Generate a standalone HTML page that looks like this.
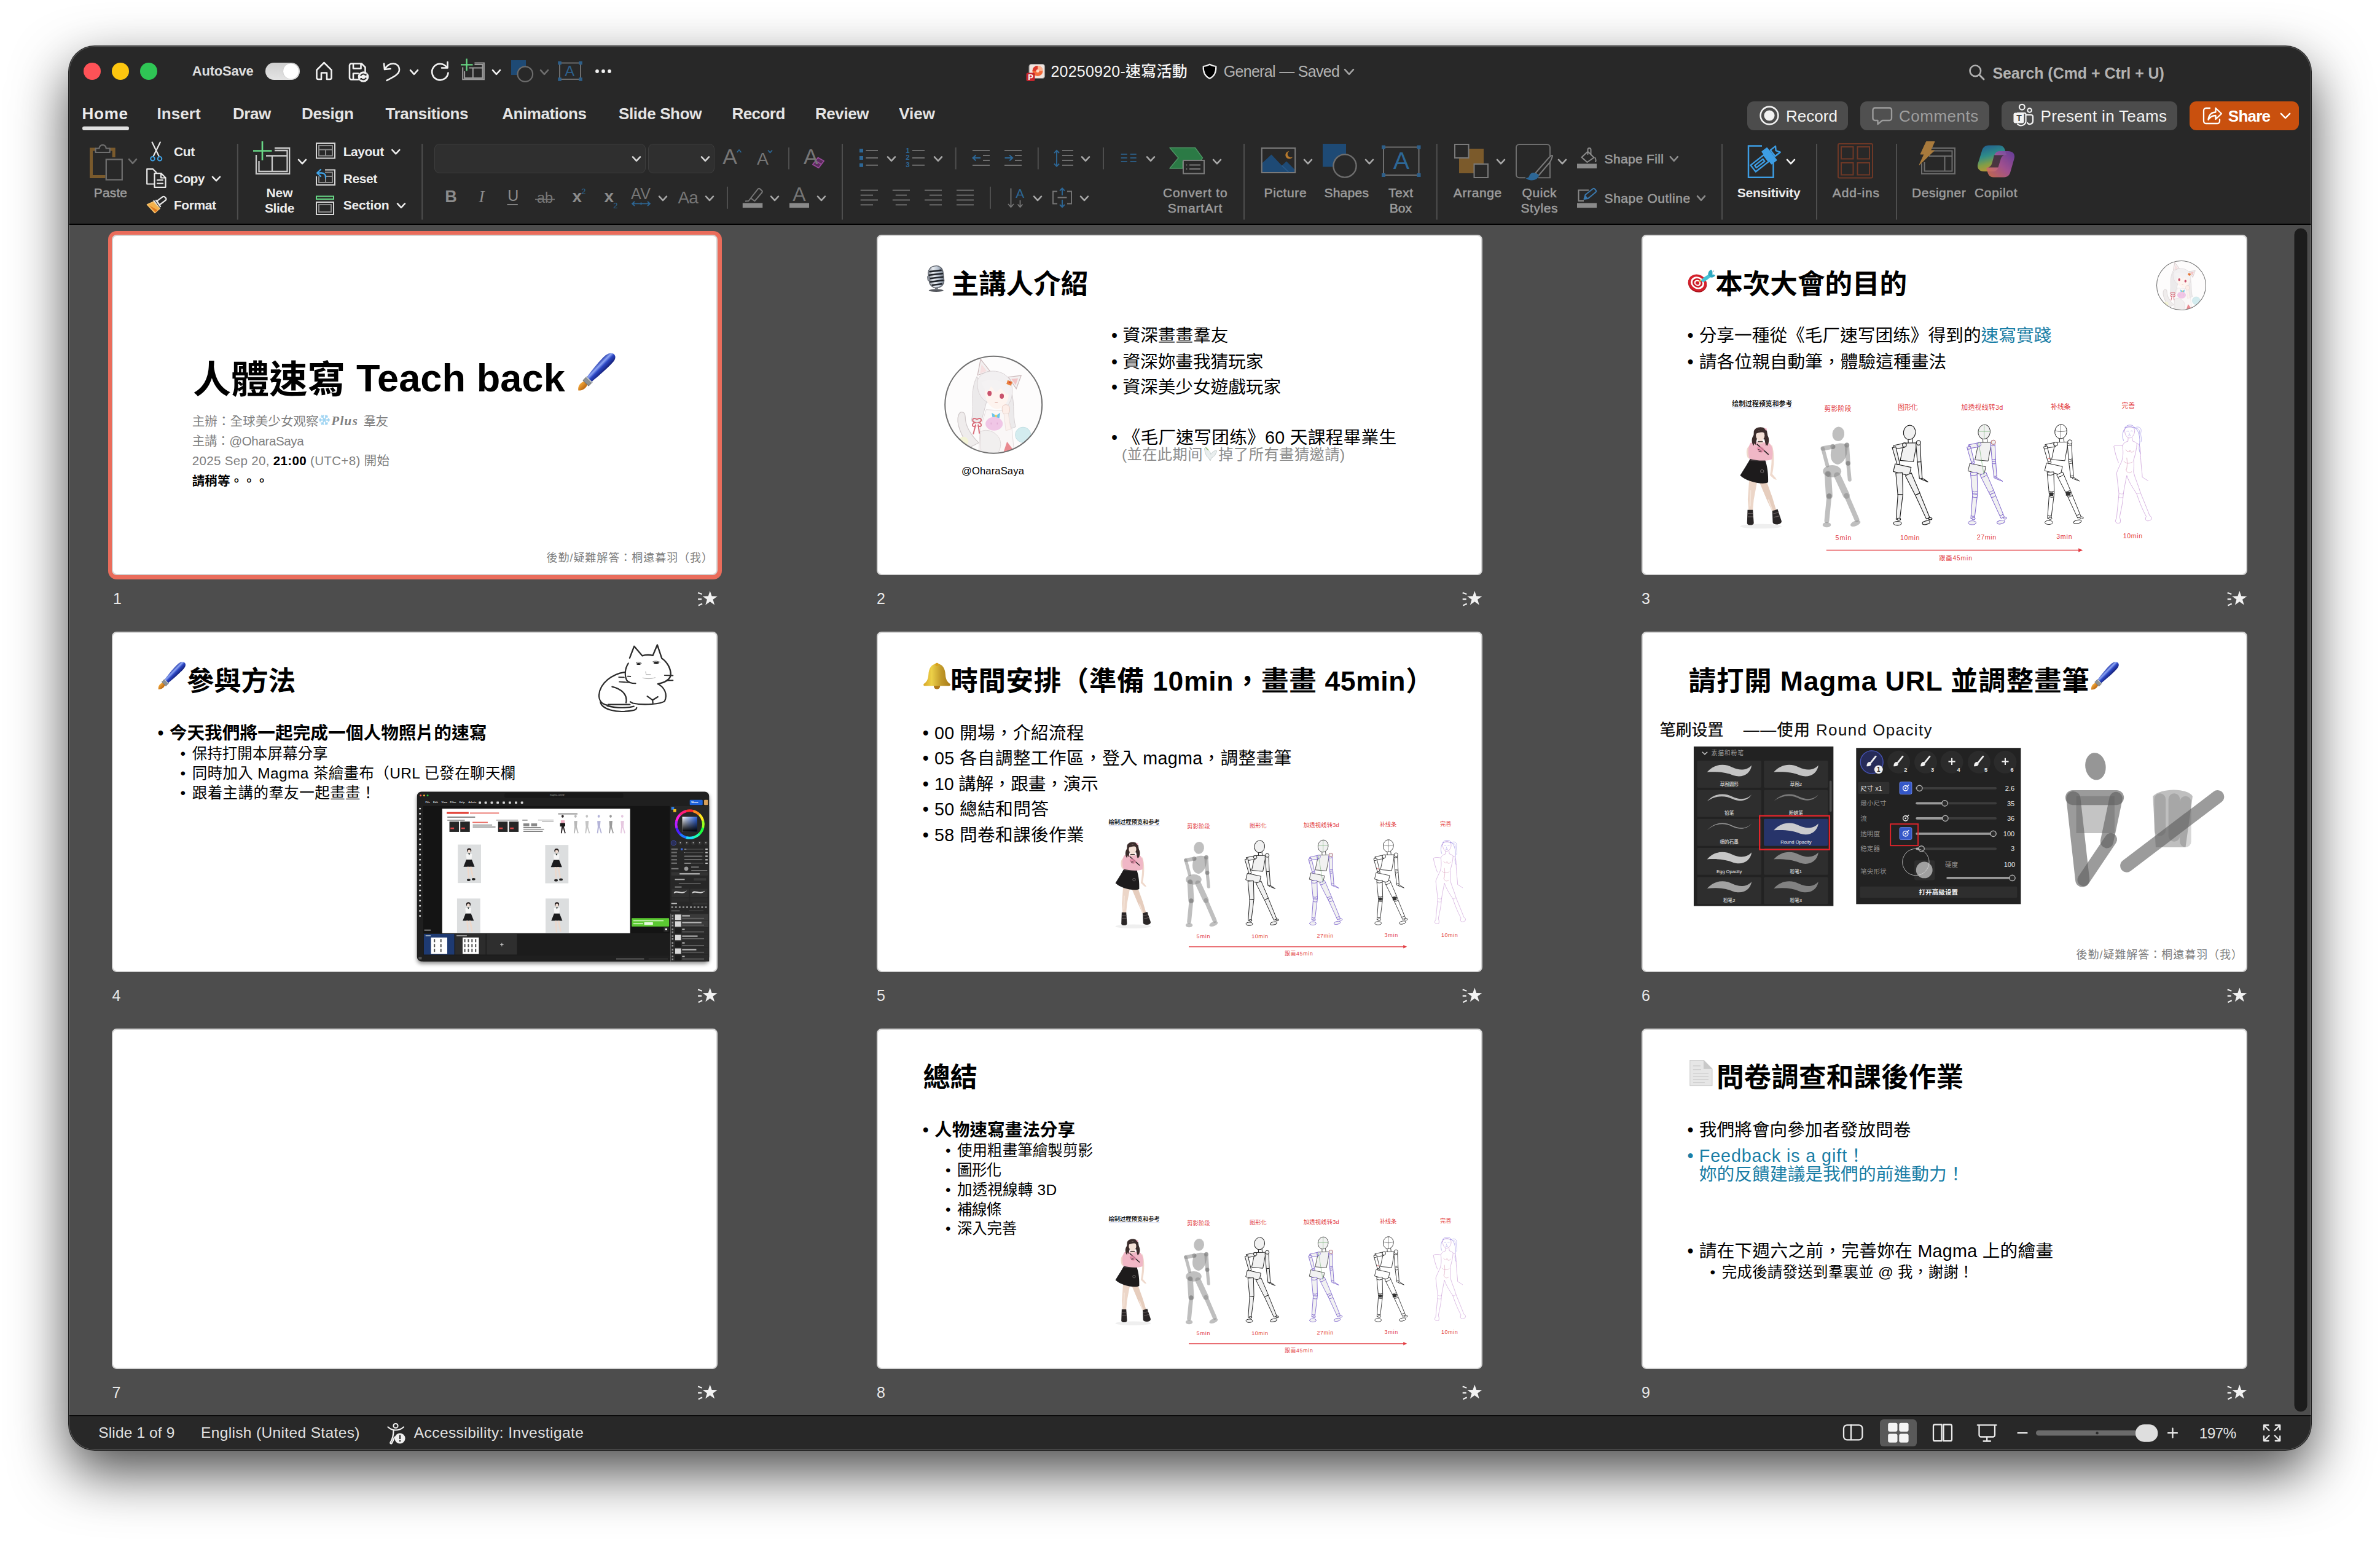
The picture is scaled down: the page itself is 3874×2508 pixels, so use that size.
<!DOCTYPE html>
<html lang="zh-Hant"><head><meta charset="utf-8"><title>20250920-速寫活動</title>
<style>
html,body{margin:0;padding:0}
body{width:3874px;height:2508px;background:#fff;position:relative;overflow:hidden;font-family:"Liberation Sans","Noto Sans CJK TC",sans-serif;}
.t{position:absolute;white-space:nowrap;}
#win{position:absolute;left:112px;top:75px;width:3650px;height:2285px;border-radius:42px;background:#4d4d4d;box-shadow:0 36px 90px rgba(0,0,0,.71),0 0 0 1px rgba(0,0,0,.82);overflow:hidden}
#in{position:absolute;left:-112px;top:-75px;width:3874px;height:2508px}
#ic{position:absolute;left:0;top:0}
#rim{position:absolute;left:0;top:0;right:0;bottom:0;border-radius:42px;box-shadow:inset 0 0 0 1.2px rgba(255,255,255,.2);pointer-events:none}
</style></head><body>
<div id="win"><div id="in">
<div style="position:absolute;left:112.0px;top:75.0px;width:3650.0px;height:289.5px;background:#282828;border-radius:0px;"></div>
<div style="position:absolute;left:112.0px;top:363.8px;width:3650.0px;height:2.4px;background:#000;border-radius:0px;"></div>
<div style="position:absolute;left:112.0px;top:2303.2px;width:3650.0px;height:2.2px;background:#0a0a0a;border-radius:0px;"></div>
<div style="position:absolute;left:112.0px;top:2305.2px;width:3650.0px;height:56.0px;background:#282828;border-radius:0px;"></div>
<div style="position:absolute;left:2844.0px;top:164.5px;width:164.0px;height:47.2px;background:#4c4c4c;border-radius:11px;"></div>
<div style="position:absolute;left:3028.0px;top:164.5px;width:210.0px;height:47.2px;background:#505050;border-radius:11px;"></div>
<div style="position:absolute;left:3258.0px;top:164.5px;width:286.0px;height:47.2px;background:#4c4c4c;border-radius:11px;"></div>
<div style="position:absolute;left:3563.8px;top:164.5px;width:178.2px;height:47.2px;background:#c9500e;border-radius:11px;"></div>
<div style="position:absolute;left:3060.0px;top:2310.0px;width:60.0px;height:43.5px;background:#595959;border-radius:6px;"></div>
<div style="position:absolute;left:707.0px;top:234.0px;width:344.0px;height:47.8px;background:#2f2f2f;border-radius:8px;box-sizing:border-box;border:1.5px solid #3d3d3d;"></div>
<div style="position:absolute;left:1054.8px;top:234.0px;width:108.4px;height:47.8px;background:#2f2f2f;border-radius:8px;box-sizing:border-box;border:1.5px solid #3d3d3d;"></div>
<div style="position:absolute;left:176.0px;top:375.5px;width:998.8px;height:567.0px;background:#ea6c5b;border-radius:14px;"></div>
<div style="position:absolute;left:182.4px;top:382.0px;width:986.0px;height:554.0px;background:#fff;border-radius:8px;box-sizing:border-box;border:2px solid #d4d4d4;"></div>
<div style="position:absolute;left:1427.0px;top:382.0px;width:986.0px;height:554.0px;background:#fff;border-radius:8px;box-sizing:border-box;border:2px solid #d4d4d4;"></div>
<div style="position:absolute;left:2672.0px;top:382.0px;width:986.0px;height:554.0px;background:#fff;border-radius:8px;box-sizing:border-box;border:2px solid #d4d4d4;"></div>
<div style="position:absolute;left:182.4px;top:1027.8px;width:986.0px;height:554.0px;background:#fff;border-radius:8px;box-sizing:border-box;border:2px solid #d4d4d4;"></div>
<div style="position:absolute;left:1427.0px;top:1027.8px;width:986.0px;height:554.0px;background:#fff;border-radius:8px;box-sizing:border-box;border:2px solid #d4d4d4;"></div>
<div style="position:absolute;left:2672.0px;top:1027.8px;width:986.0px;height:554.0px;background:#fff;border-radius:8px;box-sizing:border-box;border:2px solid #d4d4d4;"></div>
<div style="position:absolute;left:182.4px;top:1673.8px;width:986.0px;height:554.0px;background:#fff;border-radius:8px;box-sizing:border-box;border:2px solid #d4d4d4;"></div>
<div style="position:absolute;left:1427.0px;top:1673.8px;width:986.0px;height:554.0px;background:#fff;border-radius:8px;box-sizing:border-box;border:2px solid #d4d4d4;"></div>
<div style="position:absolute;left:2672.0px;top:1673.8px;width:986.0px;height:554.0px;background:#fff;border-radius:8px;box-sizing:border-box;border:2px solid #d4d4d4;"></div>
<svg id="ic" width="3874" height="2508" viewBox="0 0 3874 2508">
<circle cx="150" cy="116" r="14" fill="#ff5257"/>
<circle cx="196" cy="116" r="14" fill="#fdc60f"/>
<circle cx="242" cy="116" r="14" fill="#2fc655"/>
<defs><linearGradient id="tg" x1="0" x2="0" y1="0" y2="1"><stop offset="0" stop-color="#cfcfcf"/><stop offset="1" stop-color="#e4e4e4"/></linearGradient></defs>
<rect x="432" y="102" width="56" height="28" rx="14" fill="url(#tg)"/>
<circle cx="473.5" cy="116" r="13" fill="#fff" stroke="#c4c4c4" stroke-width="0.8"/>
<path d="M515.5 114 L527.5 102 L539.5 114 V126.5 a2.5 2.5 0 0 1 -2.5 2.5 H532 V118.5 H523 V129 H518 a2.5 2.5 0 0 1 -2.5 -2.5 Z" fill="none" stroke="#f2f2f2" stroke-width="2.6" stroke-linecap="round" stroke-linejoin="round"/>
<path d="M572 103.5 H588.5 L594.5 109.5 V119 M583 129.5 H572 a3 3 0 0 1 -3 -3 V106.5 a3 3 0 0 1 3 -3 M575 104 V111.5 H587.5 V104 M575 129 V119.5 H583" fill="none" stroke="#f2f2f2" stroke-width="2.6" stroke-linecap="round" stroke-linejoin="round"/>
<circle cx="591.5" cy="125" r="8.8" fill="#f2f2f2"/>
<path d="M587 123.5 a5 5 0 0 1 8.2 -1.6 M596 126.5 a5 5 0 0 1 -8.2 1.6" fill="none" stroke="#282828" stroke-width="2"/><path d="M596.5 119.5 v3.4 h-3.4z M586.5 130.5 v-3.4 h3.4z" fill="#282828"/>
<path d="M625 103.5 L626 113 L635.5 112 M626.5 112.5 C632 100 650 100.5 650 113.5 C650 121 640 125.5 629.5 131" fill="none" stroke="#f2f2f2" stroke-width="2.6" stroke-linecap="round" stroke-linejoin="round"/>
<path d="M668.0 114.2 L674.0 120.8 L680.0 114.2" fill="none" stroke="#f2f2f2" stroke-width="2.6" stroke-linecap="round" stroke-linejoin="round"/>
<path d="M728.5 101 V110.5 H719 M727.5 110 A13.2 13.2 0 1 0 729.5 118.5" fill="none" stroke="#f2f2f2" stroke-width="2.6" stroke-linecap="round" stroke-linejoin="round"/>
<path d="M753.2 109.6 V129.3 H787.9 V102.5 H772.4 M756.1 116.0 V126.9 H785.5 V105.1 H772.4 M763.4 110.5 H785.5 M769.8 110.5 V126.9" fill="none" stroke="#9c9c9c" stroke-width="2.0"/>
<path d="M750.0 105.4 H769.5 M759.6 95.5 V115.3" fill="none" stroke="#66d683" stroke-width="2.30"/>
<path d="M802.0 114.2 L808.0 120.8 L814.0 114.2" fill="none" stroke="#f2f2f2" stroke-width="2.6" stroke-linecap="round" stroke-linejoin="round"/>
<rect x="832" y="98" width="24" height="24" fill="#1e4a75"/>
<circle cx="854.8" cy="120.6" r="12.3" fill="#282828" stroke="#6c6c6c" stroke-width="2.2"/>
<path d="M880.0 114.2 L886.0 120.8 L892.0 114.2" fill="none" stroke="#6e6e6e" stroke-width="2.6" stroke-linecap="round" stroke-linejoin="round"/>
<rect x="911" y="102.5" width="34" height="26.5" fill="none" stroke="#6c6c6c" stroke-width="2"/>
<rect x="908.2" y="99.7" width="5.6" height="5.6" fill="#2d5f8a"/>
<rect x="942.2" y="99.7" width="5.6" height="5.6" fill="#2d5f8a"/>
<rect x="908.2" y="126.2" width="5.6" height="5.6" fill="#2d5f8a"/>
<rect x="942.2" y="126.2" width="5.6" height="5.6" fill="#2d5f8a"/>
<circle cx="972" cy="116" r="2.9" fill="#f2f2f2"/>
<circle cx="982" cy="116" r="2.9" fill="#f2f2f2"/>
<circle cx="992" cy="116" r="2.9" fill="#f2f2f2"/>
<rect x="1675" y="104.5" width="25.5" height="23" rx="4" fill="#f0e4de" stroke="#8d8d8d" stroke-width="1.2"/>
<circle cx="1689" cy="115.5" r="8.5" fill="#f36a3a"/><path d="M1689 115.5 V107 A8.5 8.5 0 0 1 1697.5 115.5 Z" fill="#ffb28e"/><path d="M1689 115.5 H1680.5 A8.5 8.5 0 0 1 1689 107 Z" fill="#d8372a"/><circle cx="1689" cy="115.5" r="2.5" fill="#ffd9c4"/>
<rect x="1670.5" y="118.5" width="14" height="13.5" rx="2.5" fill="#c4262e"/>
<path d="M1969 104.8 C1973 107.2 1976 107.8 1979.3 108 C1979.8 118 1976 124.5 1969 127.8 C1962 124.5 1958.2 118 1958.7 108 C1962 107.8 1965 107.2 1969 104.8 Z" fill="#000" stroke="#f0f0f0" stroke-width="2.2" stroke-linejoin="round"/>
<path d="M2189.0 113.2 L2196.0 120.8 L2203.0 113.2" fill="none" stroke="#a4a4a4" stroke-width="2.6" stroke-linecap="round" stroke-linejoin="round"/>
<circle cx="3215.3" cy="115.3" r="8.8" fill="none" stroke="#b0b0b0" stroke-width="2.6"/><path d="M3221.8 121.8 L3229 129" stroke="#b0b0b0" stroke-width="3" stroke-linecap="round"/>
<rect x="134" y="205.8" width="76" height="6.2" rx="3.1" fill="#e0e0e0"/>
<circle cx="2880" cy="188" r="14.4" fill="none" stroke="#f2f2f2" stroke-width="2.6"/><circle cx="2880" cy="188" r="8.6" fill="#f2f2f2"/>
<path d="M3052 175.5 H3075.5 a3.5 3.5 0 0 1 3.5 3.5 V192.5 a3.5 3.5 0 0 1 -3.5 3.5 H3064 L3056.5 202 V196 H3052 a3.5 3.5 0 0 1 -3.5 -3.5 V179 a3.5 3.5 0 0 1 3.5 -3.5 Z" fill="none" stroke="#9c9c9c" stroke-width="2.4" stroke-linejoin="round"/>
<circle cx="3291.3" cy="174.2" r="4.4" fill="none" stroke="#f2f2f2" stroke-width="2.2"/><circle cx="3303.6" cy="179.5" r="3.3" fill="none" stroke="#f2f2f2" stroke-width="2"/><path d="M3299 187 H3306 a3 3 0 0 1 3 3 V197 a5 5 0 0 1 -9 3 M3284 202 a8 8 0 0 0 13.5 -4 V186 a2 2 0 0 0 -2 -2 H3284" fill="none" stroke="#f2f2f2" stroke-width="2.2" stroke-linecap="round"/><rect x="3277.5" y="183.5" width="17" height="17" rx="3" fill="#f2f2f2"/>
<path d="M3597 176 H3591 a4 4 0 0 0 -4 4 V197 a4 4 0 0 0 4 4 H3609 a4 4 0 0 0 4 -4 V194.5 M3594.5 195 C3595 187 3600 182.5 3606.5 182.5 V176 L3616 185 L3606.5 194 V188 C3601.5 188 3597.5 190 3594.5 195 Z" fill="none" stroke="#fff" stroke-width="2.3" stroke-linejoin="round" stroke-linecap="round"/>
<path d="M3712.8 184.8 L3720.0 192.2 L3727.2 184.8" fill="none" stroke="#fff" stroke-width="2.4" stroke-linecap="round" stroke-linejoin="round"/>
<circle cx="644" cy="2320.5" r="3.6" fill="none" stroke="#f0f0f0" stroke-width="2"/><path d="M631.5 2322.5 C636 2326.5 640 2327.5 644 2327.5 C648 2327.5 652.5 2326.500 657 2322.5 M640.5 2328 C640.5 2336 639 2342 635.500 2347.5 C634.5 2349 637 2350.500 638 2348.5 C640 2345 641 2342 642 2339" fill="none" stroke="#f0f0f0" stroke-width="2.2" stroke-linecap="round" stroke-linejoin="round"/><circle cx="651" cy="2341" r="8.6" fill="#f0f0f0"/><rect x="650" y="2335.5" width="2.2" height="6.6" fill="#282828"/><rect x="650" y="2344" width="2.2" height="2.3" fill="#282828"/>
<rect x="3001" y="2319.3" width="30.4" height="24" rx="5.5" fill="none" stroke="#eaeaea" stroke-width="2.3" stroke-linejoin="round" stroke-linecap="round"/><path d="M3013 2319.5 V2343" fill="none" stroke="#eaeaea" stroke-width="2.3" stroke-linejoin="round" stroke-linecap="round"/>
<rect x="3073.2" y="2315.8" width="15.3" height="14.2" rx="3" fill="#f4f4f4"/>
<rect x="3073.2" y="2333.6" width="15.3" height="14.2" rx="3" fill="#f4f4f4"/>
<rect x="3091.3" y="2315.8" width="15.3" height="14.2" rx="3" fill="#f4f4f4"/>
<rect x="3091.3" y="2333.6" width="15.3" height="14.2" rx="3" fill="#f4f4f4"/>
<path d="M3147 2321 a2.5 2.5 0 0 1 2.5 -2.5 H3160.5 V2345.2 H3149.5 a2.5 2.5 0 0 1 -2.5 -2.5 Z M3163.5 2318.5 H3174.500 a2.5 2.5 0 0 1 2.5 2.5 V2342.700 a2.5 2.5 0 0 1 -2.5 2.5 H3163.5 Z" fill="none" stroke="#eaeaea" stroke-width="2.3" stroke-linejoin="round" stroke-linecap="round"/>
<path d="M3218.8 2319.3 H3249.6 M3221.5 2320 V2335.500 a3 3 0 0 0 3 3 H3244 a3 3 0 0 0 3 -3 V2320 M3234.2 2339 V2345.2 M3228.5 2345.5 H3240" fill="none" stroke="#eaeaea" stroke-width="2.3" stroke-linejoin="round" stroke-linecap="round"/>
<path d="M3284.500 2332.2 H3299.500" fill="none" stroke="#eaeaea" stroke-width="2.3" stroke-linejoin="round" stroke-linecap="round"/>
<rect x="3314" y="2328" width="198" height="8.4" rx="4.2" fill="#6b6b6b"/><circle cx="3413.6" cy="2332.3" r="2.2" fill="#2c2c2c"/>
<rect x="3476" y="2318.3" width="36.4" height="28.4" rx="14" fill="#dedede"/>
<path d="M3529 2332.2 H3544 M3536.5 2324.700 V2339.700" fill="none" stroke="#eaeaea" stroke-width="2.3" stroke-linejoin="round" stroke-linecap="round"/>
<path d="M3685 2327 V2319.500 H3692.500 M3685.5 2320 L3693.5 2328 M3711.2 2327 V2319.500 H3703.700 M3710.700 2320 L3702.700 2328 M3685 2337.500 V2345 H3692.500 M3685.5 2344.500 L3693.5 2336.500 M3711.2 2337.500 V2345 H3703.700 M3710.700 2344.500 L3702.700 2336.500" fill="none" stroke="#eaeaea" stroke-width="2.3" stroke-linejoin="round" stroke-linecap="round"/>
<rect x="3734.5" y="371.5" width="21" height="1926" rx="10.5" fill="#1c1c1c"/>
<path d="M171.5 287.5 H148.5 V243 H156 M178 243 H185.200 V256" fill="none" stroke="#7a5a2c" stroke-width="5"/>
<path d="M155.5 248 V241.500 H161.5 a5.6 5.6 0 0 1 11.2 0 H178.700 V248 Z" fill="#282828" stroke="#6e6e6e" stroke-width="2.2" stroke-linejoin="round"/>
<rect x="172.8" y="259.500" width="26" height="33" fill="#282828" stroke="#6e6e6e" stroke-width="2.3"/>
<path d="M210.0 259.2 L216.0 265.8 L222.0 259.2" fill="none" stroke="#6e6e6e" stroke-width="2.6" stroke-linecap="round" stroke-linejoin="round"/>
<path d="M247.6 231.5 L258.6 254 M260.8 231.5 L249.8 254" fill="none" stroke="#e8e8e8" stroke-width="2.2" stroke-linecap="round" stroke-linejoin="round"/>
<circle cx="248.5" cy="258.2" r="3.3" fill="none" stroke="#3fa2e6" stroke-width="2"/><circle cx="260" cy="258.2" r="3.3" fill="none" stroke="#3fa2e6" stroke-width="2"/>
<path d="M250.5 299.5 H239.2 V275.2 H249 L254 280.2 M251.5 282.2 H262.5 L269.5 289.2 V304.8 H251.5 Z M262 282.5 V289.5 H269 M256 293 H265 M256 298.5 H265" fill="none" stroke="#e8e8e8" stroke-width="2.2" stroke-linecap="round" stroke-linejoin="round"/>
<path d="M346.0 287.8 L352.0 294.2 L358.0 287.8" fill="none" stroke="#ececec" stroke-width="2.6" stroke-linecap="round" stroke-linejoin="round"/>
<path d="M268.8 321.5 a2.6 2.6 0 0 0 -3.8 -1.3 L255.5 327.200 L259.5 333.5 L269 326.300 a2.6 2.6 0 0 0 -0.2 -4.8 Z M254 326.200 L261 336 M250.5 327 L259.5 339.500" fill="none" stroke="#e8e8e8" stroke-width="2.2" stroke-linecap="round" stroke-linejoin="round"/>
<path d="M249.5 328.5 L239.5 333 L252 346.500 L259.800 339.300 Z" fill="#f3b04a" stroke="#f6c06a" stroke-width="1.6" stroke-linejoin="round"/><path d="M243 334.5 L253 345.500 L256.500 342 Z" fill="#e07820"/>
<path d="M386.8 234.0 V357.5" stroke="#4e4e4e" stroke-width="2"/>
<path d="M417.0 252.0 V282.8 H471.2 V241.0 H447.0 M421.5 262.0 V279.0 H467.5 V245.0 H447.0 M433.0 253.5 H467.5 M443.0 253.5 V279.0" fill="none" stroke="#c9c9c9" stroke-width="2.3"/>
<path d="M412.0 245.5 H442.5 M427.0 230.0 V261.0" fill="none" stroke="#68d886" stroke-width="2.64"/>
<path d="M486.0 259.9 L492.0 266.4 L498.0 259.9" fill="none" stroke="#ececec" stroke-width="2.6" stroke-linecap="round" stroke-linejoin="round"/>
<rect x="515" y="233" width="30" height="24.5" fill="none" stroke="#d6d6d6" stroke-width="2"/>
<rect x="519" y="237" width="22" height="16.5" fill="none" stroke="#8a8a8a" stroke-width="2"/>
<path d="M519 243.5 H541 M530 243.5 V253.500" stroke="#8a8a8a" stroke-width="2" fill="none"/>
<path d="M638.3 243.9 L644.3 250.4 L650.3 243.9" fill="none" stroke="#ececec" stroke-width="2.6" stroke-linecap="round" stroke-linejoin="round"/>
<rect x="515" y="276.5" width="30" height="24.5" fill="none" stroke="#d6d6d6" stroke-width="2"/>
<rect x="519" y="280.5" width="22" height="16.5" fill="none" stroke="#8a8a8a" stroke-width="2"/>
<rect x="512" y="272" width="17" height="15" fill="#282828"/><path d="M530 285 V297 M530 287 H541" stroke="#8a8a8a" stroke-width="2" fill="none"/>
<path d="M522 276 L516 281.500 L522 287 M516.5 281.5 H523.500 C528 281.500 530.500 284.500 530 289.500" fill="none" stroke="#3fa2e6" stroke-width="2.3" stroke-linecap="round" stroke-linejoin="round"/>
<rect x="515" y="319.500" width="28" height="4.6" fill="none" stroke="#68d886" stroke-width="2"/>
<rect x="515" y="329" width="28" height="20" fill="none" stroke="#d6d6d6" stroke-width="2"/><rect x="519" y="333" width="20" height="12" fill="none" stroke="#8a8a8a" stroke-width="2"/>
<path d="M647.0 331.4 L653.0 337.9 L659.0 331.4" fill="none" stroke="#ececec" stroke-width="2.6" stroke-linecap="round" stroke-linejoin="round"/>
<path d="M687.2 234.0 V357.5" stroke="#4e4e4e" stroke-width="2"/>
<path d="M1030.0 255.4 L1036.0 261.9 L1042.0 255.4" fill="none" stroke="#d6d6d6" stroke-width="2.6" stroke-linecap="round" stroke-linejoin="round"/>
<path d="M1142.0 255.4 L1148.0 261.9 L1154.0 255.4" fill="none" stroke="#d6d6d6" stroke-width="2.6" stroke-linecap="round" stroke-linejoin="round"/>
<path d="M1199.5 248 L1203 244.200 L1206.500 248" fill="none" stroke="#2d6796" stroke-width="1.8"/>
<path d="M1250 244.5 L1253.5 248.300 L1257 244.500" fill="none" stroke="#2d6796" stroke-width="1.8"/>
<path d="M1284.0 240.0 V275.5" stroke="#4e4e4e" stroke-width="2"/>
<path d="M1331.5 256.5 L1341.200 262 L1332.5 273.200 L1322.800 267.700 Z M1327.5 261.800 L1337 267.5" fill="#5a2c5c" stroke="#9a4a9c" stroke-width="1.7" stroke-linejoin="round"/>
<path d="M1371.0 234.0 V357.5" stroke="#4e4e4e" stroke-width="2"/>
<path d="M825.5 333 H842.800" stroke="#8c8c8c" stroke-width="1.8"/>
<path d="M871 324.5 H903" stroke="#767676" stroke-width="1.6"/>
<path d="M1029 331.5 H1058 M1033 328 L1029 331.500 L1033 335 M1054 328 L1058 331.500 L1054 335 M1043.5 329.5 V333.500" fill="none" stroke="#2d6796" stroke-width="1.7"/>
<path d="M1073.0 319.6 L1079.0 326.1 L1085.0 319.6" fill="none" stroke="#a8a8a8" stroke-width="2.6" stroke-linecap="round" stroke-linejoin="round"/>
<path d="M1149.0 319.6 L1155.0 326.1 L1161.0 319.6" fill="none" stroke="#a8a8a8" stroke-width="2.6" stroke-linecap="round" stroke-linejoin="round"/>
<path d="M1184.0 303.7 V339.8" stroke="#4e4e4e" stroke-width="2"/>
<path d="M1222 322.5 L1233.500 307.800 a2.5 2.5 0 0 1 3.500 -0.4 L1239.8 310 a2.5 2.5 0 0 1 0.4 3.500 L1228.500 327.200 Z M1222 322.5 L1218.500 327 L1213 327.500" fill="none" stroke="#767676" stroke-width="2" stroke-linejoin="round"/>
<rect x="1208.8" y="330.500" width="32.5" height="7.6" fill="#8a8a8a"/>
<path d="M1255.0 319.6 L1261.0 326.1 L1267.0 319.6" fill="none" stroke="#a8a8a8" stroke-width="2.6" stroke-linecap="round" stroke-linejoin="round"/>
<rect x="1285" y="330.500" width="32" height="7.6" fill="#8a8a8a"/>
<path d="M1331.0 319.6 L1337.0 326.1 L1343.0 319.6" fill="none" stroke="#a8a8a8" stroke-width="2.6" stroke-linecap="round" stroke-linejoin="round"/>
<rect x="1399" y="242.2" width="6" height="6" fill="#2d6796"/>
<path d="M1409.5 245.2 H1429.0" stroke="#767676" stroke-width="1.8"/>
<path d="M1485.0 245.2 H1505.0" stroke="#767676" stroke-width="1.8"/>
<rect x="1399" y="254.0" width="6" height="6" fill="#2d6796"/>
<path d="M1409.5 257.0 H1429.0" stroke="#767676" stroke-width="1.8"/>
<path d="M1485.0 257.0 H1505.0" stroke="#767676" stroke-width="1.8"/>
<rect x="1399" y="265.8" width="6" height="6" fill="#2d6796"/>
<path d="M1409.5 268.8 H1429.0" stroke="#767676" stroke-width="1.8"/>
<path d="M1485.0 268.8 H1505.0" stroke="#767676" stroke-width="1.8"/>
<path d="M1445.0 255.4 L1451.0 261.9 L1457.0 255.4" fill="none" stroke="#a8a8a8" stroke-width="2.6" stroke-linecap="round" stroke-linejoin="round"/>
<path d="M1521.0 255.4 L1527.0 261.9 L1533.0 255.4" fill="none" stroke="#a8a8a8" stroke-width="2.6" stroke-linecap="round" stroke-linejoin="round"/>
<path d="M1555.7 240.0 V275.5" stroke="#4e4e4e" stroke-width="2"/>
<path d="M1583.0 245.2 H1611.0" stroke="#767676" stroke-width="1.8"/>
<path d="M1583.0 269.0 H1611.0" stroke="#767676" stroke-width="1.8"/>
<path d="M1600.0 253.2 H1611.0" stroke="#767676" stroke-width="1.8"/>
<path d="M1600.0 261.0 H1611.0" stroke="#767676" stroke-width="1.8"/>
<path d="M1635.0 245.2 H1663.0" stroke="#767676" stroke-width="1.8"/>
<path d="M1635.0 269.0 H1663.0" stroke="#767676" stroke-width="1.8"/>
<path d="M1652.0 253.2 H1663.0" stroke="#767676" stroke-width="1.8"/>
<path d="M1652.0 261.0 H1663.0" stroke="#767676" stroke-width="1.8"/>
<path d="M1583.5 257 H1596 M1588.500 252.5 L1583.500 257 L1588.500 261.500" fill="none" stroke="#2d6796" stroke-width="2"/>
<path d="M1635.5 257 H1648 M1643.200 252.5 L1648.200 257 L1643.200 261.500" fill="none" stroke="#2d6796" stroke-width="2"/>
<path d="M1689.8 240.0 V275.5" stroke="#4e4e4e" stroke-width="2"/>
<path d="M1729.0 245.2 H1747.0" stroke="#767676" stroke-width="1.8"/>
<path d="M1729.0 253.1 H1747.0" stroke="#767676" stroke-width="1.8"/>
<path d="M1729.0 261.0 H1747.0" stroke="#767676" stroke-width="1.8"/>
<path d="M1729.0 268.9 H1747.0" stroke="#767676" stroke-width="1.8"/>
<path d="M1720 245 V270.500 M1716 249 L1720 244.800 L1724 249 M1716 266.5 L1720 270.700 L1724 266.500" fill="none" stroke="#2d6796" stroke-width="1.9"/>
<path d="M1761.0 255.4 L1767.0 261.9 L1773.0 255.4" fill="none" stroke="#a8a8a8" stroke-width="2.6" stroke-linecap="round" stroke-linejoin="round"/>
<path d="M1796.0 240.0 V275.5" stroke="#4e4e4e" stroke-width="2"/>
<path d="M1824.7 251.0 H1834.7" stroke="#2d6796" stroke-width="1.6"/>
<path d="M1839.7 251.0 H1849.7" stroke="#2d6796" stroke-width="1.6"/>
<path d="M1824.7 257.0 H1834.7" stroke="#2d6796" stroke-width="1.6"/>
<path d="M1839.7 257.0 H1849.7" stroke="#2d6796" stroke-width="1.6"/>
<path d="M1824.7 263.0 H1834.7" stroke="#2d6796" stroke-width="1.6"/>
<path d="M1839.7 263.0 H1849.7" stroke="#2d6796" stroke-width="1.6"/>
<path d="M1867.0 255.4 L1873.0 261.9 L1879.0 255.4" fill="none" stroke="#a8a8a8" stroke-width="2.6" stroke-linecap="round" stroke-linejoin="round"/>
<path d="M1400.7 309.6 H1429.0" stroke="#767676" stroke-width="1.8"/>
<path d="M1452.8 309.6 H1481.0" stroke="#767676" stroke-width="1.8"/>
<path d="M1505.0 309.6 H1533.0" stroke="#767676" stroke-width="1.8"/>
<path d="M1557.0 309.6 H1585.0" stroke="#767676" stroke-width="1.8"/>
<path d="M1400.7 317.6 H1421.0" stroke="#767676" stroke-width="1.8"/>
<path d="M1457.8 317.6 H1476.0" stroke="#767676" stroke-width="1.8"/>
<path d="M1513.0 317.6 H1533.0" stroke="#767676" stroke-width="1.8"/>
<path d="M1557.0 317.6 H1585.0" stroke="#767676" stroke-width="1.8"/>
<path d="M1400.7 325.5 H1429.0" stroke="#767676" stroke-width="1.8"/>
<path d="M1452.8 325.5 H1481.0" stroke="#767676" stroke-width="1.8"/>
<path d="M1505.0 325.5 H1533.0" stroke="#767676" stroke-width="1.8"/>
<path d="M1557.0 325.5 H1585.0" stroke="#767676" stroke-width="1.8"/>
<path d="M1400.7 333.4 H1421.0" stroke="#767676" stroke-width="1.8"/>
<path d="M1457.8 333.4 H1476.0" stroke="#767676" stroke-width="1.8"/>
<path d="M1513.0 333.4 H1533.0" stroke="#767676" stroke-width="1.8"/>
<path d="M1557.0 333.4 H1585.0" stroke="#767676" stroke-width="1.8"/>
<path d="M1612.0 303.7 V339.8" stroke="#4e4e4e" stroke-width="2"/>
<path d="M1645.5 306.5 V337 M1641 332 L1645.500 337.200 L1650 332 M1660.5 326 V337 M1656.5 332.500 L1660.500 337.200 L1664.500 332.500" fill="none" stroke="#767676" stroke-width="1.8"/>
<path d="M1683.0 319.6 L1689.0 326.1 L1695.0 319.6" fill="none" stroke="#a8a8a8" stroke-width="2.6" stroke-linecap="round" stroke-linejoin="round"/>
<path d="M1721 311.5 H1714 V331.500 H1721 M1737 311.5 H1744 V331.500 H1737 M1721.5 321.5 H1736.500" fill="none" stroke="#767676" stroke-width="1.9"/>
<path d="M1729 306.5 V318 M1729 325 V337 M1725 310.5 L1729 306.300 L1733 310.500 M1725 333 L1729 337.200 L1733 333" fill="none" stroke="#2d6796" stroke-width="1.9"/>
<path d="M1759.0 319.6 L1765.0 326.1 L1771.0 319.6" fill="none" stroke="#a8a8a8" stroke-width="2.6" stroke-linecap="round" stroke-linejoin="round"/>
<path d="M1904 240.5 H1945.500 L1957.500 257 L1953 263 H1925 V274 H1904 L1918 257 Z" fill="#2b7a45" stroke="#4c9563" stroke-width="1.4" stroke-linejoin="round"/>
<rect x="1926" y="261" width="34" height="21.5" fill="#282828" stroke="#7a7a7a" stroke-width="2"/><path d="M1936 268.5 H1954 M1936 275 H1954" stroke="#7a7a7a" stroke-width="1.8"/><circle cx="1931.5" cy="268.500" r="1.1" fill="#7a7a7a"/><circle cx="1931.5" cy="275" r="1.1" fill="#7a7a7a"/>
<path d="M1975.0 259.9 L1981.0 266.4 L1987.0 259.9" fill="none" stroke="#a8a8a8" stroke-width="2.6" stroke-linecap="round" stroke-linejoin="round"/>
<path d="M2025.0 234.0 V357.5" stroke="#4e4e4e" stroke-width="2"/>
<rect x="2053.8" y="241" width="54.4" height="40" fill="#282828" stroke="#7a7a7a" stroke-width="2"/>
<path d="M2055 280 V265 L2069.500 251.500 L2086.500 269.500 L2094 262.500 L2107 275.500 V280 Z" fill="#1e4a75"/><path d="M2086.5 269.500 L2097.500 280" stroke="#2c5c8c" stroke-width="1.6"/>
<path d="M2098.5 246 a6.3 6.3 0 1 0 5.6 9.500 a5 5 0 0 1 -5.6 -9.500 Z" fill="#b7792c"/>
<path d="M2123.0 259.9 L2129.0 266.4 L2135.0 259.9" fill="none" stroke="#a8a8a8" stroke-width="2.6" stroke-linecap="round" stroke-linejoin="round"/>
<rect x="2153" y="234" width="38" height="37.5" fill="#1e4a75"/><circle cx="2189" cy="270" r="18.6" fill="#282828" stroke="#6e6e6e" stroke-width="2.4"/>
<path d="M2223.0 259.9 L2229.0 266.4 L2235.0 259.9" fill="none" stroke="#a8a8a8" stroke-width="2.6" stroke-linecap="round" stroke-linejoin="round"/>
<rect x="2252" y="239.500" width="57.5" height="45.5" fill="none" stroke="#6e6e6e" stroke-width="2"/>
<rect x="2249" y="236.5" width="6" height="6" fill="#2d5f8a"/>
<rect x="2306.5" y="236.5" width="6" height="6" fill="#2d5f8a"/>
<rect x="2249" y="282" width="6" height="6" fill="#2d5f8a"/>
<rect x="2306.5" y="282" width="6" height="6" fill="#2d5f8a"/>
<path d="M2338.8 234.0 V357.5" stroke="#4e4e4e" stroke-width="2"/>
<rect x="2375" y="242" width="40" height="40" fill="#7b5a2b"/>
<rect x="2368" y="235" width="22.5" height="22" fill="#282828" stroke="#7a7a7a" stroke-width="2"/><rect x="2399.5" y="267" width="22.5" height="22" fill="#282828" stroke="#7a7a7a" stroke-width="2"/>
<path d="M2437.0 259.9 L2443.0 266.4 L2449.0 259.9" fill="none" stroke="#a8a8a8" stroke-width="2.6" stroke-linecap="round" stroke-linejoin="round"/>
<path d="M2504 289.2 H2523 V240 a5 5 0 0 0 -5 -5 H2473 a5 5 0 0 0 -5 5 V284.200 a5 5 0 0 0 5 5 H2483" fill="none" stroke="#6e6e6e" stroke-width="2"/>
<path d="M2526.5 255.5 C2528.500 251 2524.500 253 2520 258 L2499 282 L2504.500 285.500 L2522 265 C2524.500 262 2525.500 258.500 2526.500 255.500 Z" fill="#282828" stroke="#7a7a7a" stroke-width="2" stroke-linejoin="round"/>
<path d="M2499 281.5 C2493 279.500 2490 283.500 2489 287 C2488 289.500 2485.500 290 2483 289.500 C2488 294.500 2497 294.500 2502 290.500 C2504.500 288.500 2505.500 285.500 2504.500 284.500 Z" fill="#2d6796"/>
<path d="M2537.0 259.9 L2543.0 266.4 L2549.0 259.9" fill="none" stroke="#a8a8a8" stroke-width="2.6" stroke-linecap="round" stroke-linejoin="round"/>
<path d="M2574.5 256 L2584.500 246.500 L2594.500 256.500 L2583.500 264 Z M2584.5 251 V243.500 a2.5 2.5 0 0 1 5 0 V251 M2596.5 257 C2597.500 260 2598.500 261.500 2597 263" fill="none" stroke="#8a8a8a" stroke-width="2" stroke-linejoin="round" stroke-linecap="round"/>
<rect x="2567" y="266.500" width="32" height="7.6" fill="#8a8a8a"/>
<path d="M2718.8 255.2 L2724.8 261.8 L2730.8 255.2" fill="none" stroke="#8c8c8c" stroke-width="2.6" stroke-linecap="round" stroke-linejoin="round"/>
<path d="M2586 309.5 H2569.500 V327 H2578" fill="none" stroke="#8a8a8a" stroke-width="2"/>
<path d="M2578.5 324 L2580.500 317 L2592.500 307.500 a2.6 2.6 0 0 1 3.600 0.400 L2597.5 309.500 a2.6 2.6 0 0 1 -0.400 3.600 L2585 323 Z" fill="#282828" stroke="#3a78ad" stroke-width="2" stroke-linejoin="round"/><path d="M2578.5 324 L2580.5 317.500 L2584.500 322.500 Z" fill="#3a78ad"/>
<rect x="2567" y="330.500" width="32" height="7.6" fill="#8a8a8a"/>
<path d="M2763.0 319.2 L2769.0 325.8 L2775.0 319.2" fill="none" stroke="#8c8c8c" stroke-width="2.6" stroke-linecap="round" stroke-linejoin="round"/>
<path d="M2803.0 234.0 V357.5" stroke="#4e4e4e" stroke-width="2"/>
<path d="M2868 237.5 H2846 V288.800 H2886.500 V262" fill="none" stroke="#3d9de4" stroke-width="2.5"/>
<g transform="rotate(-38 2874 258)" fill="#282828" stroke="#3d9de4" stroke-width="2.4" stroke-linejoin="round"><rect x="2848" y="251.500" width="27" height="13.5"/><rect x="2853" y="256" width="17" height="4.5"/><rect x="2876.5" y="246" width="9.5" height="24.500" fill="#3d9de4"/><path d="M2888.500 252 H2899 L2895 258.200 L2899 264.500 H2888.500 Z"/></g>
<path d="M2909.0 259.9 L2915.0 266.4 L2921.0 259.9" fill="none" stroke="#f2f2f2" stroke-width="2.6" stroke-linecap="round" stroke-linejoin="round"/>
<path d="M2957.0 234.0 V357.5" stroke="#4e4e4e" stroke-width="2"/>
<rect x="2992" y="234" width="56" height="55.5" rx="2" fill="none" stroke="#6e3826" stroke-width="2"/>
<rect x="2997" y="239" width="19.5" height="19.500" fill="none" stroke="#6e3826" stroke-width="2"/>
<rect x="2997" y="265" width="19.5" height="19.500" fill="none" stroke="#6e3826" stroke-width="2"/>
<rect x="3023.5" y="239" width="19.5" height="19.500" fill="none" stroke="#6e3826" stroke-width="2"/>
<rect x="3023.5" y="265" width="19.5" height="19.500" fill="none" stroke="#6e3826" stroke-width="2"/>
<path d="M3087.0 234.0 V357.5" stroke="#4e4e4e" stroke-width="2"/>
<path d="M3140 241 H3182 V282.800 H3128 V266 M3142 245.500 H3177.5 V278.500 H3132.500 V264 M3140 254 H3177.500 M3165.5 254 V278.500" fill="none" stroke="#6e6e6e" stroke-width="2"/>
<path d="M3135.5 230.5 H3149 L3142.500 245 H3148.500 L3124 268.500 L3132 251 H3126 Z" fill="#a87a3c" stroke="#a87a3c" stroke-width="1" stroke-linejoin="round"/>
<defs><linearGradient id="cp1" x1="0" y1="0" x2="0.300" y2="1"><stop offset="0" stop-color="#1f5f9e"/><stop offset="0.45" stop-color="#2f9a96"/><stop offset="0.75" stop-color="#8fae4a"/><stop offset="1" stop-color="#c9a53a"/></linearGradient><linearGradient id="cp2" x1="1" y1="0" x2="0" y2="1"><stop offset="0" stop-color="#6a3fa8"/><stop offset="0.5" stop-color="#b0559c"/><stop offset="1" stop-color="#d8744a"/></linearGradient></defs>
<path d="M3237 236.5 H3254 C3260 236.500 3262.500 240 3264 245.500 L3266 252 C3262 252 3258 254 3256.500 259.500 L3252.500 273 C3251 277 3248 279 3244.500 279 H3229 C3221 279 3217.500 273 3219.500 266.500 L3226 245.500 C3227.500 240 3231 236.500 3237 236.500 Z" fill="url(#cp1)" opacity="0.88"/>
<path d="M3262 288.5 H3245 C3239 288.500 3236.500 285 3235 279.500 L3233 273 C3237 273 3241 271 3242.500 265.500 L3246.500 252 C3248 248 3251 246 3254.500 246 H3268.500 C3277.500 246 3280.500 252 3278.500 258.500 L3272.500 279.500 C3271 285 3268 288.500 3262 288.500 Z" fill="url(#cp2)" opacity="0.88"/>
<path d="M3246 252.500 L3242.500 265.500 C3241.500 269 3239.500 271.500 3236.500 272.500 L3239.500 272.500 L3252.500 272.500 L3256.500 259.500 C3257.500 256 3259.500 253.500 3262.500 252.500 Z" fill="#282828" opacity="0.75"/>
<polygon points="1155.7,961.7 1158.6,970.3 1167.7,970.4 1160.5,975.8 1163.1,984.5 1155.7,979.3 1148.3,984.5 1150.9,975.8 1143.7,970.4 1152.8,970.3" fill="#f2f2f2"/>
<path d="M1136.1 964.7 l6.6 2.2 M1136.1 975.1 h6 M1136.8 985.5 l6.3 -3" stroke="#f2f2f2" stroke-width="2.1" fill="none"/>
<polygon points="2400.3,961.7 2403.2,970.3 2412.3,970.4 2405.1,975.8 2407.7,984.5 2400.3,979.3 2392.9,984.5 2395.5,975.8 2388.3,970.4 2397.4,970.3" fill="#f2f2f2"/>
<path d="M2380.7 964.7 l6.6 2.2 M2380.7 975.1 h6 M2381.4 985.5 l6.3 -3" stroke="#f2f2f2" stroke-width="2.1" fill="none"/>
<polygon points="3645.3,961.7 3648.2,970.3 3657.3,970.4 3650.1,975.8 3652.7,984.5 3645.3,979.3 3637.9,984.5 3640.5,975.8 3633.3,970.4 3642.4,970.3" fill="#f2f2f2"/>
<path d="M3625.7 964.7 l6.6 2.2 M3625.7 975.1 h6 M3626.4 985.5 l6.3 -3" stroke="#f2f2f2" stroke-width="2.1" fill="none"/>
<polygon points="1155.7,1607.5 1158.6,1616.1 1167.7,1616.2 1160.5,1621.6 1163.1,1630.3 1155.7,1625.1 1148.3,1630.3 1150.9,1621.6 1143.7,1616.2 1152.8,1616.1" fill="#f2f2f2"/>
<path d="M1136.1 1610.5 l6.6 2.2 M1136.1 1620.9 h6 M1136.8 1631.3 l6.3 -3" stroke="#f2f2f2" stroke-width="2.1" fill="none"/>
<polygon points="2400.3,1607.5 2403.2,1616.1 2412.3,1616.2 2405.1,1621.6 2407.7,1630.3 2400.3,1625.1 2392.9,1630.3 2395.5,1621.6 2388.3,1616.2 2397.4,1616.1" fill="#f2f2f2"/>
<path d="M2380.7 1610.5 l6.6 2.2 M2380.7 1620.9 h6 M2381.4 1631.3 l6.3 -3" stroke="#f2f2f2" stroke-width="2.1" fill="none"/>
<polygon points="3645.3,1607.5 3648.2,1616.1 3657.3,1616.2 3650.1,1621.6 3652.7,1630.3 3645.3,1625.1 3637.9,1630.3 3640.5,1621.6 3633.3,1616.2 3642.4,1616.1" fill="#f2f2f2"/>
<path d="M3625.7 1610.5 l6.6 2.2 M3625.7 1620.9 h6 M3626.4 1631.3 l6.3 -3" stroke="#f2f2f2" stroke-width="2.1" fill="none"/>
<polygon points="1155.7,2253.5 1158.6,2262.1 1167.7,2262.2 1160.5,2267.6 1163.1,2276.3 1155.7,2271.1 1148.3,2276.3 1150.9,2267.6 1143.7,2262.2 1152.8,2262.1" fill="#f2f2f2"/>
<path d="M1136.1 2256.5 l6.6 2.2 M1136.1 2266.9 h6 M1136.8 2277.3 l6.3 -3" stroke="#f2f2f2" stroke-width="2.1" fill="none"/>
<polygon points="2400.3,2253.5 2403.2,2262.1 2412.3,2262.2 2405.1,2267.6 2407.7,2276.3 2400.3,2271.1 2392.9,2276.3 2395.5,2267.6 2388.3,2262.2 2397.4,2262.1" fill="#f2f2f2"/>
<path d="M2380.7 2256.5 l6.6 2.2 M2380.7 2266.9 h6 M2381.4 2277.3 l6.3 -3" stroke="#f2f2f2" stroke-width="2.1" fill="none"/>
<polygon points="3645.3,2253.5 3648.2,2262.1 3657.3,2262.2 3650.1,2267.6 3652.7,2276.3 3645.3,2271.1 3637.9,2276.3 3640.5,2267.6 3633.3,2262.2 3642.4,2262.1" fill="#f2f2f2"/>
<path d="M3625.7 2256.5 l6.6 2.2 M3625.7 2266.9 h6 M3626.4 2277.3 l6.3 -3" stroke="#f2f2f2" stroke-width="2.1" fill="none"/>
<defs><g id="strip"><g transform="translate(414,741) scale(0.4072)"><ellipse cx="186" cy="872" rx="180" ry="20" fill="#dcdcdc" opacity="0.45"/><path d="M84 470 L72 640 L82 770 L112 770 L124 640 L156 470 Z" fill="#ecd6c8"/><path d="M168 480 L236 640 L296 770 L326 760 L284 620 L230 470 Z" fill="#e6cdbd"/><path d="M96 560 L92 700 M250 640 L286 740" stroke="#f7e9df" stroke-width="10" opacity="0.8"/><path d="M70 730 L116 730 L124 842 C126 866 70 868 66 846 Z" fill="#2a2626"/><path d="M72 760 H118 M72 790 H120" stroke="#6a6060" stroke-width="6"/><path d="M284 738 L330 724 L364 826 C370 858 296 866 288 838 Z" fill="#2a2626"/><path d="M290 764 L338 752 M296 794 L348 782" stroke="#6a6060" stroke-width="6"/><path d="M96 170 C58 186 52 232 74 286 L98 274 C88 232 98 204 116 188 Z" fill="#efd9cc"/><path d="M262 176 C284 240 282 330 264 430 L300 464 L322 470 L312 452 L284 420 C304 330 302 230 282 170 Z" fill="#efd9cc"/><path d="M92 290 L222 296 C244 360 250 430 248 492 C200 516 58 486 6 432 C38 380 70 330 92 290 Z" fill="#1d1b1c"/><path d="M96 300 L218 306" stroke="#3c3638" stroke-width="10"/><circle cx="196" cy="396" r="14" fill="none" stroke="#8d8688" stroke-width="4"/><path d="M96 150 C130 140 220 140 262 156 C292 190 292 250 282 292 C230 312 140 302 86 288 C74 240 70 190 96 150 Z" fill="#f0b7c6"/><path d="M150 160 L252 252" stroke="#2a2224" stroke-width="9"/><path d="M148 196 C168 172 212 182 216 214 C200 246 168 244 148 196 Z" fill="#e58aa6" opacity="0.75"/><path d="M160 206 l30 10 M166 222 l26 4" stroke="#3a2c30" stroke-width="5"/><path d="M160 110 H200 V156 H160 Z" fill="#f1dace"/><path d="M158 140 H202" stroke="#2a2224" stroke-width="7"/><path d="M124 62 C120 2 238 -4 240 62 C250 112 246 156 230 178 L216 120 L150 120 L140 168 C120 146 122 102 124 62 Z" fill="#3b2c2b"/><path d="M126 80 C100 110 104 150 122 176 L138 130 Z M238 80 C262 108 258 150 240 178 L226 130 Z" fill="#3b2c2b"/><ellipse cx="180" cy="86" rx="38" ry="46" fill="#f4e0d6"/><path d="M136 74 C148 30 212 28 224 70 C202 52 170 58 136 74 Z" fill="#3b2c2b"/><path d="M212 22 l26 6 l-6 18 z" fill="#f3b5c8"/></g><g transform="translate(700.4,741.5) scale(0.4072)"><ellipse cx="152" cy="72" rx="52" ry="62" transform="rotate(8 152 72)" fill="#8a8a8a" fill-opacity="0.55"/><path d="M96 190 C110 150 200 140 232 170 C236 240 210 320 150 336 C96 330 70 280 96 190 Z" fill="#8a8a8a" fill-opacity="0.55"/><ellipse cx="98" cy="394" rx="80" ry="52" fill="#8a8a8a" fill-opacity="0.55"/><path d="M105 182 L18 198" stroke="#8a8a8a" stroke-opacity="0.55" stroke-width="39" stroke-linecap="round" fill="none"/><path d="M18 198 L57 345" stroke="#8a8a8a" stroke-opacity="0.55" stroke-width="32" stroke-linecap="round" fill="none"/><path d="M226 168 L236 325" stroke="#8a8a8a" stroke-opacity="0.55" stroke-width="39" stroke-linecap="round" fill="none"/><path d="M236 325 L250 468" stroke="#8a8a8a" stroke-opacity="0.55" stroke-width="32" stroke-linecap="round" fill="none"/><path d="M62 420 L73 608" stroke="#8a8a8a" stroke-opacity="0.55" stroke-width="58" stroke-linecap="round" fill="none"/><path d="M73 608 L52 822" stroke="#8a8a8a" stroke-opacity="0.55" stroke-width="42" stroke-linecap="round" fill="none"/><path d="M142 432 L222 604" stroke="#8a8a8a" stroke-opacity="0.55" stroke-width="58" stroke-linecap="round" fill="none"/><path d="M222 604 L312 812" stroke="#8a8a8a" stroke-opacity="0.55" stroke-width="42" stroke-linecap="round" fill="none"/><circle cx="105" cy="182" r="22" fill="#6e6e6e" fill-opacity="0.4"/><circle cx="226" cy="168" r="22" fill="#6e6e6e" fill-opacity="0.4"/><circle cx="236" cy="325" r="22" fill="#6e6e6e" fill-opacity="0.4"/><circle cx="73" cy="608" r="22" fill="#6e6e6e" fill-opacity="0.4"/><circle cx="62" cy="420" r="22" fill="#6e6e6e" fill-opacity="0.4"/><ellipse cx="52" cy="858" rx="36" ry="22" fill="#8a8a8a" fill-opacity="0.55"/><ellipse cx="300" cy="846" rx="46" ry="22" transform="rotate(-22 300 846)" fill="#8a8a8a" fill-opacity="0.55"/></g><g transform="translate(951,737) scale(0.4072)"><g fill="#f1f1f1" stroke="#1c1c1c" stroke-width="6" stroke-linejoin="round"><ellipse cx="152" cy="70" rx="52" ry="62" transform="rotate(8 152 70)"/><path d="M140 130 L142 160 M176 126 L180 158" fill="none"/><path d="M104 162 L216 160 L186 322 L72 312 Z"/><path d="M28 342 L166 372 L150 444 L12 408 Z"/></g><g fill="#f1f1f1" stroke="#1c1c1c" stroke-width="6" stroke-linejoin="round"><path d="M101.7 163.9 L15.2 182.6 L20.8 213.4 L108.3 200.1 Z"/><path d="M2.9 202.0 L45.4 348.1 L68.6 341.9 L33.1 194.0 Z"/><path d="M207.6 169.2 L220.4 326.0 L251.6 324.0 L244.4 166.8 Z"/><path d="M220.4 326.5 L238.1 469.2 L261.9 466.8 L251.6 323.5 Z"/><path d="M33.5 421.7 L51.0 609.3 L95.0 606.7 L90.5 418.3 Z"/><path d="M51.9 605.9 L36.4 820.5 L67.6 823.5 L94.1 610.1 Z"/><path d="M116.1 444.0 L202.0 613.3 L242.0 594.7 L167.9 420.0 Z"/><path d="M202.6 612.4 L297.6 818.2 L326.4 805.8 L241.4 595.6 Z"/><circle cx="108" cy="178" r="17"/><circle cx="230" cy="160" r="19"/><path d="M250 474 L312 498 L296 486 L262 466 Z"/><ellipse cx="48" cy="856" rx="34" ry="17"/><ellipse cx="60" cy="820" rx="15" ry="9"/><ellipse cx="296" cy="850" rx="34" ry="15" transform="rotate(-14 296 850)"/><ellipse cx="332" cy="816" rx="15" ry="9"/></g></g><g transform="translate(1214,735) scale(0.4072)"><g fill="#f1f1f1" stroke="#3a3a3a" stroke-width="5.2" stroke-linejoin="round"><ellipse cx="152" cy="70" rx="52" ry="62" transform="rotate(8 152 70)"/><path d="M140 130 L142 160 M176 126 L180 158" fill="none"/><path d="M104 162 L216 160 L186 322 L72 312 Z"/><path d="M28 342 L166 372 L150 444 L12 408 Z"/></g><g fill="#f1f1f1" stroke="#7a60cc" stroke-width="5.2" stroke-linejoin="round"><path d="M101.7 163.9 L15.2 182.6 L20.8 213.4 L108.3 200.1 Z"/><path d="M91.3 166.1 Q85.7 185.5 97.8 201.7" fill="none"/><path d="M25.6 180.4 Q19.6 197.7 31.3 211.8" fill="none"/><path d="M2.9 202.0 L45.4 348.1 L68.6 341.9 L33.1 194.0 Z"/><path d="M8.0 219.5 Q25.0 224.3 37.4 211.7" fill="none"/><path d="M40.3 330.5 Q54.6 336.1 64.3 324.2" fill="none"/><path d="M207.6 169.2 L220.4 326.0 L251.6 324.0 L244.4 166.8 Z"/><path d="M209.2 188.0 Q227.8 195.8 245.2 185.7" fill="none"/><path d="M218.9 307.2 Q235.4 315.1 250.7 305.1" fill="none"/><path d="M220.4 326.5 L238.1 469.2 L261.9 466.8 L251.6 323.5 Z"/><path d="M222.6 343.6 Q238.6 351.1 252.8 340.7" fill="none"/><path d="M236.0 452.0 Q249.2 459.8 260.7 449.6" fill="none"/><path d="M33.5 421.7 L51.0 609.3 L95.0 606.7 L90.5 418.3 Z"/><path d="M35.6 444.2 Q63.8 451.5 91.0 440.9" fill="none"/><path d="M48.9 586.8 Q72.2 594.4 94.5 584.1" fill="none"/><path d="M51.9 605.9 L36.4 820.5 L67.6 823.5 L94.1 610.1 Z"/><path d="M50.1 631.7 Q69.6 642.6 90.9 635.7" fill="none"/><path d="M38.3 794.7 Q53.6 805.3 70.7 797.9" fill="none"/><path d="M116.1 444.0 L202.0 613.3 L242.0 594.7 L167.9 420.0 Z"/><path d="M126.4 464.3 Q155.4 460.8 176.8 440.9" fill="none"/><path d="M191.7 593.0 Q216.2 591.5 233.1 573.7" fill="none"/><path d="M202.6 612.4 L297.6 818.2 L326.4 805.8 L241.4 595.6 Z"/><path d="M214.0 637.1 Q236.4 637.2 251.6 620.8" fill="none"/><path d="M286.2 793.5 Q304.8 795.3 316.2 780.6" fill="none"/><circle cx="108" cy="178" r="17"/><circle cx="230" cy="160" r="19"/><path d="M250 474 L312 498 L296 486 L262 466 Z"/><ellipse cx="48" cy="856" rx="34" ry="17"/><ellipse cx="60" cy="820" rx="15" ry="9"/><ellipse cx="296" cy="850" rx="34" ry="15" transform="rotate(-14 296 850)"/><ellipse cx="332" cy="816" rx="15" ry="9"/></g><path d="M152 10 V132 M102 66 H204" stroke="#58a058" stroke-width="3" fill="none"/><path d="M104 162 L150 444" stroke="#58a058" stroke-width="3"/><circle cx="232" cy="160" r="19" fill="none" stroke="#e08a4a" stroke-width="4"/></g><g transform="translate(1484,734) scale(0.4072)"><g fill="#fff" stroke="#1c1c1c" stroke-width="5" stroke-linejoin="round"><ellipse cx="152" cy="70" rx="52" ry="62" transform="rotate(8 152 70)"/><path d="M140 130 L142 160 M176 126 L180 158" fill="none"/><path d="M104 162 L216 160 L186 322 L72 312 Z"/><path d="M28 342 L166 372 L150 444 L12 408 Z"/></g><g fill="#fff" stroke="#1c1c1c" stroke-width="5" stroke-linejoin="round"><path d="M101.7 163.9 L15.2 182.6 L20.8 213.4 L108.3 200.1 Z"/><path d="M91.3 166.1 Q85.7 185.5 97.8 201.7" fill="none"/><path d="M25.6 180.4 Q19.6 197.7 31.3 211.8" fill="none"/><path d="M2.9 202.0 L45.4 348.1 L68.6 341.9 L33.1 194.0 Z"/><path d="M8.0 219.5 Q25.0 224.3 37.4 211.7" fill="none"/><path d="M40.3 330.5 Q54.6 336.1 64.3 324.2" fill="none"/><path d="M207.6 169.2 L220.4 326.0 L251.6 324.0 L244.4 166.8 Z"/><path d="M209.2 188.0 Q227.8 195.8 245.2 185.7" fill="none"/><path d="M218.9 307.2 Q235.4 315.1 250.7 305.1" fill="none"/><path d="M220.4 326.5 L238.1 469.2 L261.9 466.8 L251.6 323.5 Z"/><path d="M222.6 343.6 Q238.6 351.1 252.8 340.7" fill="none"/><path d="M236.0 452.0 Q249.2 459.8 260.7 449.6" fill="none"/><path d="M33.5 421.7 L51.0 609.3 L95.0 606.7 L90.5 418.3 Z"/><path d="M35.6 444.2 Q63.8 451.5 91.0 440.9" fill="none"/><path d="M48.9 586.8 Q72.2 594.4 94.5 584.1" fill="none"/><path d="M51.9 605.9 L36.4 820.5 L67.6 823.5 L94.1 610.1 Z"/><path d="M50.1 631.7 Q69.6 642.6 90.9 635.7" fill="none"/><path d="M38.3 794.7 Q53.6 805.3 70.7 797.9" fill="none"/><path d="M116.1 444.0 L202.0 613.3 L242.0 594.7 L167.9 420.0 Z"/><path d="M126.4 464.3 Q155.4 460.8 176.8 440.9" fill="none"/><path d="M191.7 593.0 Q216.2 591.5 233.1 573.7" fill="none"/><path d="M202.6 612.4 L297.6 818.2 L326.4 805.8 L241.4 595.6 Z"/><path d="M214.0 637.1 Q236.4 637.2 251.6 620.8" fill="none"/><path d="M286.2 793.5 Q304.8 795.3 316.2 780.6" fill="none"/><circle cx="108" cy="178" r="17"/><circle cx="230" cy="160" r="19"/><path d="M250 474 L312 498 L296 486 L262 466 Z"/><ellipse cx="48" cy="856" rx="34" ry="17"/><ellipse cx="60" cy="820" rx="15" ry="9"/><ellipse cx="296" cy="850" rx="34" ry="15" transform="rotate(-14 296 850)"/><ellipse cx="332" cy="816" rx="15" ry="9"/></g><path d="M152 10 V132 M102 60 C130 74 180 74 204 60" stroke="#1c1c1c" stroke-width="3" fill="none"/><rect x="196" y="590" width="40" height="34" fill="#333"/><rect x="56" y="596" width="30" height="30" fill="#333"/><path d="M40 300 l20 8" stroke="#e23a40" stroke-width="5"/></g><g transform="translate(1726,733) scale(0.4072)"><g fill="none" stroke="#c490d2" stroke-width="3.6" stroke-linejoin="round" stroke-linecap="round"><path d="M110 60 C110 20 190 14 196 62 C198 100 170 128 150 128 C128 126 110 100 110 60 Z"/><path d="M118 40 C90 60 86 120 100 150 M190 36 C230 50 250 120 236 200 C232 230 240 250 246 262" stroke="#8b7be0"/><path d="M112 38 C130 8 184 6 198 44 C180 30 140 30 112 38 Z" stroke="#8b7be0"/><path d="M140 126 L138 156 C110 164 96 176 92 196 C70 190 30 186 16 200 C24 250 40 300 56 340 M92 196 C96 240 100 280 84 330 C70 360 50 400 40 430 C46 500 56 560 60 610 C54 690 44 760 40 822 C20 850 30 872 70 862 C78 840 70 826 66 812 C80 740 96 680 98 612 C106 560 118 500 128 452 C150 520 190 570 214 612 C240 690 270 760 296 806 C280 836 300 858 336 836 C350 820 340 806 326 800 C300 730 270 660 246 600 C230 540 200 480 186 420 C190 380 192 340 186 322 C200 280 214 220 216 176 C236 178 244 200 246 240 C248 300 250 330 252 352 C256 400 262 440 262 466 L312 498 M174 124 L178 154 C196 160 210 166 216 176"/><path d="M120 230 C130 250 150 252 160 236 M128 300 C134 340 132 370 126 400 M150 236 C160 256 182 256 190 238 M104 330 C120 350 150 352 176 336 M120 400 C130 430 150 440 170 420" stroke="#d99ab8"/><path d="M196 40 C230 20 262 40 250 80 C244 110 262 130 252 160 M210 46 C236 44 244 70 236 96 M128 70 q8 -5 16 0 M162 68 q8 -5 16 0 M150 84 l-3 14 l8 1 M140 108 q12 6 22 -1" stroke="#8b7be0" stroke-width="2.6"/><path d="M60 606 q20 12 40 4 M214 608 q18 8 32 -6 M58 640 q16 8 36 2" stroke="#c490d2" stroke-width="2.4"/></g></g><text x="388" y="673" font-size="23.500" font-weight="700" fill="#1c1c1c" textLength="212" font-family='Liberation Sans,Noto Sans CJK SC,sans-serif'>绘制过程预览和参考</text><path d="M390 679 H600" stroke="#7a8ae0" stroke-width="1.2" opacity="0.6"/><text x="713" y="690" font-size="23.500" fill="#e23a40" textLength="95" font-family='Liberation Sans,Noto Sans CJK SC,sans-serif'>剪影阶段</text><text x="972" y="686" font-size="23.500" fill="#e23a40" textLength="70" font-family='Liberation Sans,Noto Sans CJK SC,sans-serif'>图形化</text><text x="1195" y="685" font-size="23.500" fill="#e23a40" textLength="147" font-family='Liberation Sans,Noto Sans CJK SC,sans-serif'>加透视线转3d</text><text x="1510" y="683" font-size="23.500" fill="#e23a40" textLength="70" font-family='Liberation Sans,Noto Sans CJK SC,sans-serif'>补线条</text><text x="1760" y="680" font-size="23.500" fill="#e23a40" textLength="47" font-family='Liberation Sans,Noto Sans CJK SC,sans-serif'>完善</text><text x="752" y="1145" font-size="23" fill="#e23a40" textLength="56" font-family='Liberation Sans,Noto Sans CJK SC,sans-serif'>5min</text><text x="980" y="1145" font-size="23" fill="#e23a40" textLength="68" font-family='Liberation Sans,Noto Sans CJK SC,sans-serif'>10min</text><text x="1250" y="1143" font-size="23" fill="#e23a40" textLength="68" font-family='Liberation Sans,Noto Sans CJK SC,sans-serif'>27min</text><text x="1530" y="1141" font-size="23" fill="#e23a40" textLength="55" font-family='Liberation Sans,Noto Sans CJK SC,sans-serif'>3min</text><text x="1765" y="1139" font-size="23" fill="#e23a40" textLength="68" font-family='Liberation Sans,Noto Sans CJK SC,sans-serif'>10min</text><path d="M720 1180 H1612" stroke="#e23a40" stroke-width="3.200"/><path d="M1623 1180 L1608 1173 V1187 Z" fill="#e23a40"/><text x="1117" y="1217" font-size="22" fill="#e23a40" textLength="116" font-family='Liberation Sans,Noto Sans CJK SC,sans-serif'>跟画45min</text></g></defs>
<g transform="translate(940.5,576.5) scale(1.0000)"><g transform="translate(0.8,59.1) rotate(-45.5)"><defs><linearGradient id="bh1" x1="0" y1="0" x2="0" y2="1"><stop offset="0" stop-color="#2a3fb0"/><stop offset="0.3" stop-color="#8ea6f4"/><stop offset="0.55" stop-color="#2c47c4"/><stop offset="1" stop-color="#141f78"/></linearGradient><linearGradient id="bo1" x1="0" y1="0" x2="0" y2="1"><stop offset="0" stop-color="#f3a83a"/><stop offset="1" stop-color="#b9660f"/></linearGradient></defs><path d="M0 0 C5 -6.500 12 -6.500 18 -3.500 V3.500 C12 6.500 5 5.500 0 0 Z" fill="url(#bo1)"/><path d="M17 -6.200 H26 V6.800 H17 Z" fill="#8b9094" stroke="#5c6064" stroke-width="0.800"/><path d="M25 -6.200 V6.800" stroke="#e4e7ea" stroke-width="1.200"/><path d="M26 -5.500 C40 -7.500 60 -9.500 72 -8.500 C80 -7.500 83 -3 83 0 C83 4 80 7.500 72 8 C58 8.500 40 7 26 5.500 Z" fill="url(#bh1)"/></g></g>
<path d="M528.0 683.5 L536.5 683.5 M533.3 683.5 L535.0 681.4 M533.3 683.5 L535.0 685.6 M528.0 683.5 L532.2 690.9 M530.6 688.1 L533.3 688.5 M530.6 688.1 L529.6 690.6 M528.0 683.5 L523.8 690.9 M525.4 688.1 L526.4 690.6 M525.4 688.1 L522.7 688.5 M528.0 683.5 L519.5 683.5 M522.7 683.5 L521.0 685.6 M522.7 683.5 L521.0 681.4 M528.0 683.5 L523.8 676.1 M525.4 678.9 L522.7 678.5 M525.4 678.9 L526.4 676.4 M528.0 683.5 L532.2 676.1 M530.6 678.9 L529.6 676.4 M530.6 678.9 L533.3 678.5 " stroke="#9fd4f2" stroke-width="1.8" fill="none" stroke-linecap="round"/>
<g transform="translate(1508.6,432.3) scale(1.0119)"><defs><linearGradient id="mc" x1="0" y1="0" x2="1" y2="0"><stop offset="0" stop-color="#8d939c"/><stop offset="0.35" stop-color="#e9edf2"/><stop offset="0.7" stop-color="#b8c2d0"/><stop offset="1" stop-color="#6f7680"/></linearGradient></defs><ellipse cx="15" cy="40" rx="12" ry="2.200" fill="#55585e"/><path d="M13 33 h5 v6 h-5 z" fill="#70747b"/><g transform="rotate(-7 15 18)"><rect x="3" y="0.500" width="24" height="35" rx="11" fill="url(#mc)" stroke="#5a5f68" stroke-width="1.2"/><path d="M6 8.500 H24 M4.500 14 H25.5 M4.500 19.500 H25.5 M5 25 H25 M7.500 30.500 H22.500" stroke="#1f2329" stroke-width="2.600" stroke-linecap="round"/><rect x="1" y="15" width="3.500" height="8" rx="1.500" fill="#8d939c" stroke="#5a5f68" stroke-width="0.800"/></g></g>
<g transform="translate(1958.5,727.0) scale(0.9583)"><path d="M2 3 C8 4 12 8 13 13 C16 8 20 6 23 7 C22 12 19 17 14 19 L12 24 L9 19 C5 17 3 10 2 3 Z" fill="#e9eeee" stroke="#c5cfcf" stroke-width="1"/><path d="M4 1 L9 6" stroke="#8fba6a" stroke-width="1.6"/></g>
<g transform="translate(1617.2,658.7) scale(1.0000)"><clipPath id="ava"><circle cx="0" cy="0" r="79"/></clipPath><circle cx="0" cy="0" r="79" fill="#fdfcfc"/><g clip-path="url(#ava)"><path d="M-40 70 C-52 50 -62 30 -57 17 C-54 9 -46 11 -46 20 C-46 36 -36 50 -24 62 Z" fill="#efecec" stroke="#cfc8c9" stroke-width="1.2"/><circle cx="48" cy="49" r="12.500" fill="#d3ecef" stroke="#bfdde2" stroke-width="1"/><circle cx="-49" cy="60" r="8" fill="#f3f3d6"/><path d="M-27 -46 C-40 -20 -30 0 -36 26 C-30 34 -20 30 -18 20 L-10 -10 Z" fill="#eceaeb" stroke="#d5cfd1" stroke-width="1"/><path d="M26 -30 C36 -10 30 16 36 36 L26 40 L18 0 Z" fill="#eceaeb" stroke="#d5cfd1" stroke-width="1"/><path d="M-21 -74 L-6 -55 L-26 -48 Z" fill="#f3f0f0" stroke="#cbb8ba" stroke-width="1.2"/><path d="M-19.500 -66 L-11 -55 L-22 -51 Z" fill="#f6dfe0"/><path d="M45 -47.500 L24 -45 L37 -26 Z" fill="#f3f0f0" stroke="#cbb8ba" stroke-width="1.2"/><path d="M40 -43 L29 -42 L36 -32 Z" fill="#f2c4c6"/><path d="M-12 8 L20 10 L30 40 L34 82 L-24 82 L-22 40 Z" fill="#faf7f7" stroke="#e3dcdd" stroke-width="1"/><path d="M22 60 L40 84 L14 84 Z" fill="#e98a90"/><path d="M-22 44 C-10 38 4 44 10 56 C14 66 10 78 2 84 L-20 84 Z" fill="#f1efef" stroke="#ddd6d7" stroke-width="1"/><path d="M-26 -40 C-18 -62 26 -60 30 -30 C32 -14 28 -4 22 2 L-10 -4 C-22 -10 -28 -24 -26 -40 Z" fill="#f2f0f1" stroke="#d9d3d5" stroke-width="1"/><path d="M-14 -24 C-12 -34 20 -30 24 -18 C26 -6 16 6 6 7 C-6 6 -15 -8 -14 -24 Z" fill="#fef4ef"/><path d="M-20 -36 C-8 -44 16 -42 27 -26 L22 -16 L12 -27 L4 -20 L-4 -30 L-10 -20 L-16 -28 Z" fill="#f4f2f3"/><ellipse cx="-6.500" cy="-18.500" rx="3.400" ry="4.200" fill="#c9526c"/><ellipse cx="13.500" cy="-14" rx="3.400" ry="4.200" fill="#c9526c"/><path d="M2 -4 q3 1.500 5 0" stroke="#d9a59c" stroke-width="1" fill="none"/><path d="M23 -40 l8 3 l-3 6 l-7 -3 z" fill="#e8803c"/><path d="M25 -37 l3 1" stroke="#d8403c" stroke-width="2"/><path d="M14 6 C14 -2 26 -2 26 6 C27 12 24 16 20 16 C16 16 14 12 14 6 Z" fill="#fdeee8" stroke="#e6c9c1" stroke-width="1"/><path d="M24 14 L28 40 L20 42 L17 15 Z" fill="#fbf1ee" stroke="#eadcd8" stroke-width="0.800"/><path d="M-3 13 l7 4.500 l7 -4.500 l-1.500 9 h-11 z" fill="#6cc4ea"/><circle cx="4" cy="18" r="2" fill="#f1d25a"/><ellipse cx="1" cy="31" rx="14" ry="11" fill="#f0c6e6"/><path d="M-4 29 v3 M6 29 v3" stroke="#d9a0cb" stroke-width="1"/><path d="M-27 24 c-7 -5 -10 3 -3 5 c-7 2 -5 9 2 5 M-27 24 c7 -5 10 3 3 5 c6 2 5 9 -2 5 M-29 32 l-4 16 M-25 32 l2 15" fill="none" stroke="#d96f7c" stroke-width="2"/></g><circle cx="0" cy="0" r="79" fill="none" stroke="#707070" stroke-width="2"/></g>
<g transform="translate(2746.3,431.0) scale(1.0000)"><g transform="rotate(28 16.6 29.6)"><ellipse cx="17.200" cy="30.600" rx="15.600" ry="13.600" fill="#a5121a"/><ellipse cx="16.600" cy="29.400" rx="15.400" ry="13.400" fill="#d4202b"/><ellipse cx="16.600" cy="29.400" rx="11.300" ry="9.800" fill="#fff"/><ellipse cx="16.600" cy="29.400" rx="8.400" ry="7.200" fill="#c91a25"/><ellipse cx="16.600" cy="29.400" rx="5.500" ry="4.700" fill="#fff"/><ellipse cx="16.600" cy="29.400" rx="3.200" ry="2.800" fill="#d4202b"/></g><path d="M19 27.500 L23 24.500" stroke="#e8c020" stroke-width="1.600"/><path d="M22.500 25.500 C25 21 31 18 36 15 L39.500 18.500 C36 22 30 26 26 28.500 Z" fill="#45c2d6"/><path d="M34 16 C34 12 36 8.500 39.500 8 C41 10 41.500 13 41 16 C43 15.500 45 16 45.500 17.500 C44 20 41 21 38 20.500 Z" fill="#2fa9c0"/><path d="M41 12 L43.500 9.500" stroke="#9ab7bf" stroke-width="1.200"/></g>
<g transform="translate(3550.5,464.6) scale(0.5062)"><clipPath id="avb"><circle cx="0" cy="0" r="79"/></clipPath><circle cx="0" cy="0" r="79" fill="#fdfcfc"/><g clip-path="url(#avb)"><path d="M-40 70 C-52 50 -62 30 -57 17 C-54 9 -46 11 -46 20 C-46 36 -36 50 -24 62 Z" fill="#efecec" stroke="#cfc8c9" stroke-width="1.2"/><circle cx="48" cy="49" r="12.500" fill="#d3ecef" stroke="#bfdde2" stroke-width="1"/><circle cx="-49" cy="60" r="8" fill="#f3f3d6"/><path d="M-27 -46 C-40 -20 -30 0 -36 26 C-30 34 -20 30 -18 20 L-10 -10 Z" fill="#eceaeb" stroke="#d5cfd1" stroke-width="1"/><path d="M26 -30 C36 -10 30 16 36 36 L26 40 L18 0 Z" fill="#eceaeb" stroke="#d5cfd1" stroke-width="1"/><path d="M-21 -74 L-6 -55 L-26 -48 Z" fill="#f3f0f0" stroke="#cbb8ba" stroke-width="1.2"/><path d="M-19.500 -66 L-11 -55 L-22 -51 Z" fill="#f6dfe0"/><path d="M45 -47.500 L24 -45 L37 -26 Z" fill="#f3f0f0" stroke="#cbb8ba" stroke-width="1.2"/><path d="M40 -43 L29 -42 L36 -32 Z" fill="#f2c4c6"/><path d="M-12 8 L20 10 L30 40 L34 82 L-24 82 L-22 40 Z" fill="#faf7f7" stroke="#e3dcdd" stroke-width="1"/><path d="M22 60 L40 84 L14 84 Z" fill="#e98a90"/><path d="M-22 44 C-10 38 4 44 10 56 C14 66 10 78 2 84 L-20 84 Z" fill="#f1efef" stroke="#ddd6d7" stroke-width="1"/><path d="M-26 -40 C-18 -62 26 -60 30 -30 C32 -14 28 -4 22 2 L-10 -4 C-22 -10 -28 -24 -26 -40 Z" fill="#f2f0f1" stroke="#d9d3d5" stroke-width="1"/><path d="M-14 -24 C-12 -34 20 -30 24 -18 C26 -6 16 6 6 7 C-6 6 -15 -8 -14 -24 Z" fill="#fef4ef"/><path d="M-20 -36 C-8 -44 16 -42 27 -26 L22 -16 L12 -27 L4 -20 L-4 -30 L-10 -20 L-16 -28 Z" fill="#f4f2f3"/><ellipse cx="-6.500" cy="-18.500" rx="3.400" ry="4.200" fill="#c9526c"/><ellipse cx="13.500" cy="-14" rx="3.400" ry="4.200" fill="#c9526c"/><path d="M2 -4 q3 1.500 5 0" stroke="#d9a59c" stroke-width="1" fill="none"/><path d="M23 -40 l8 3 l-3 6 l-7 -3 z" fill="#e8803c"/><path d="M25 -37 l3 1" stroke="#d8403c" stroke-width="2"/><path d="M14 6 C14 -2 26 -2 26 6 C27 12 24 16 20 16 C16 16 14 12 14 6 Z" fill="#fdeee8" stroke="#e6c9c1" stroke-width="1"/><path d="M24 14 L28 40 L20 42 L17 15 Z" fill="#fbf1ee" stroke="#eadcd8" stroke-width="0.800"/><path d="M-3 13 l7 4.500 l7 -4.500 l-1.500 9 h-11 z" fill="#6cc4ea"/><circle cx="4" cy="18" r="2" fill="#f1d25a"/><ellipse cx="1" cy="31" rx="14" ry="11" fill="#f0c6e6"/><path d="M-4 29 v3 M6 29 v3" stroke="#d9a0cb" stroke-width="1"/><path d="M-27 24 c-7 -5 -10 3 -3 5 c-7 2 -5 9 2 5 M-27 24 c7 -5 10 3 3 5 c6 2 5 9 -2 5 M-29 32 l-4 16 M-25 32 l2 15" fill="none" stroke="#d96f7c" stroke-width="2"/></g><circle cx="0" cy="0" r="79" fill="none" stroke="#707070" stroke-width="2"/></g>
<use href="#strip" transform="translate(2640.0,350.0) scale(0.46219)"/>
<g transform="translate(257.2,1078.6) scale(0.7339)"><g transform="translate(0.8,59.1) rotate(-45.5)"><defs><linearGradient id="bh2" x1="0" y1="0" x2="0" y2="1"><stop offset="0" stop-color="#2a3fb0"/><stop offset="0.3" stop-color="#8ea6f4"/><stop offset="0.55" stop-color="#2c47c4"/><stop offset="1" stop-color="#141f78"/></linearGradient><linearGradient id="bo2" x1="0" y1="0" x2="0" y2="1"><stop offset="0" stop-color="#f3a83a"/><stop offset="1" stop-color="#b9660f"/></linearGradient></defs><path d="M0 0 C5 -6.500 12 -6.500 18 -3.500 V3.500 C12 6.500 5 5.500 0 0 Z" fill="url(#bo2)"/><path d="M17 -6.200 H26 V6.800 H17 Z" fill="#8b9094" stroke="#5c6064" stroke-width="0.800"/><path d="M25 -6.200 V6.800" stroke="#e4e7ea" stroke-width="1.200"/><path d="M26 -5.500 C40 -7.500 60 -9.500 72 -8.500 C80 -7.500 83 -3 83 0 C83 4 80 7.500 72 8 C58 8.500 40 7 26 5.500 Z" fill="url(#bh2)"/></g></g>
<g transform="translate(950,1035) scale(0.09086)" fill="none" stroke="#2b2b2b" stroke-width="24" stroke-linecap="round" stroke-linejoin="round"><path d="M825 395 L905 185 L1050 355 C1110 335 1180 335 1240 350 L1320 160 L1400 400 C1500 470 1560 580 1560 690 C1555 770 1480 830 1330 860" stroke-width="26"/><path d="M800 490 C740 580 730 700 770 790 C800 830 860 850 930 850"/><path d="M1450 705 L1600 710 M1480 800 L1600 795 M630 738 L725 742 M790 722 L840 726 M640 822 L820 832" stroke-width="20"/><ellipse cx="985" cy="500" rx="38" ry="17" fill="#1c1c1c" stroke="none"/><ellipse cx="1300" cy="482" rx="48" ry="21" fill="#1c1c1c" stroke="none"/><path d="M940 480 C970 465 1010 470 1040 490 M1240 460 C1280 445 1330 450 1370 470" stroke-width="8"/><path d="M1110 640 L1120 690 L1200 690 M1060 750 C1130 775 1220 770 1280 745" stroke="#8a8a8a" stroke-width="8"/><path d="M730 650 C520 680 290 840 275 1060 C272 1150 320 1220 420 1240"/><path d="M510 910 C680 950 790 1050 760 1195"/><path d="M1330 860 C1450 920 1510 1050 1450 1170 C1380 1215 1100 1250 880 1205 L835 1180"/><path d="M1140 1080 L1235 1150 L1330 1090 M1235 1150 L1240 1200"/><path d="M300 1180 C320 1300 560 1400 900 1330 C930 1320 950 1300 950 1285 M440 1228 H830 M420 1250 C600 1300 800 1290 900 1262" /></g>
<g transform="translate(670,1280) scale(0.21008)"><defs><filter id="mgs" x="-10%" y="-10%" width="120%" height="125%"><feGaussianBlur stdDeviation="14"/></filter></defs><rect x="42" y="58" width="2263" height="1315" rx="34" fill="#000" opacity="0.45" filter="url(#mgs)"/><rect x="42" y="40" width="2263" height="1315" rx="34" fill="#1f1f1f"/><rect x="90" y="152" width="1910" height="985" fill="#141414"/><rect x="237" y="172" width="1456" height="965" fill="#fff"/><circle cx="70" cy="70" r="7" fill="#fe5f57"/><circle cx="97" cy="70" r="7" fill="#febc2e"/><circle cx="124" cy="70" r="7" fill="#28c840"/><rect x="720" y="52" width="920" height="36" rx="10" fill="#181818"/><rect x="2155" y="104" width="100" height="40" rx="5" fill="#1f63d8"/><rect x="2266" y="104" width="30" height="40" rx="5" fill="#d8a05a"/><circle cx="65" cy="172.0" r="7" fill="#e0e0e0"/><circle cx="65" cy="211.6" r="7" fill="#e0e0e0"/><circle cx="65" cy="251.2" r="7" fill="#e0e0e0"/><circle cx="65" cy="290.8" r="7" fill="#e0e0e0"/><circle cx="65" cy="330.4" r="7" fill="#e0e0e0"/><circle cx="65" cy="370.0" r="7" fill="#e0e0e0"/><circle cx="65" cy="409.6" r="7" fill="#e0e0e0"/><circle cx="65" cy="449.2" r="7" fill="#e0e0e0"/><circle cx="65" cy="488.8" r="7" fill="#e0e0e0"/><circle cx="65" cy="528.4" r="7" fill="#e0e0e0"/><circle cx="65" cy="568.0" r="7" fill="#e0e0e0"/><circle cx="65" cy="607.6" r="7" fill="#e0e0e0"/><circle cx="65" cy="647.2" r="7" fill="#e0e0e0"/><circle cx="65" cy="686.8" r="7" fill="#e0e0e0"/><circle cx="65" cy="726.4" r="7" fill="#e0e0e0"/><circle cx="65" cy="766.0" r="7" fill="#e0e0e0"/><circle cx="65" cy="805.6" r="7" fill="#e0e0e0"/><circle cx="65" cy="845.2" r="7" fill="#e0e0e0"/><circle cx="65" cy="884.8" r="7" fill="#e0e0e0"/><circle cx="65" cy="924.4" r="7" fill="#e0e0e0"/><circle cx="65" cy="964.0" r="7" fill="#e0e0e0"/><circle cx="65" cy="1003.6" r="7" fill="#e0e0e0"/><rect x="520" y="117" width="18" height="16" rx="3" fill="#d8d8d8"/><rect x="565" y="117" width="18" height="16" rx="3" fill="#d8d8d8"/><rect x="612" y="117" width="18" height="16" rx="3" fill="#d8d8d8"/><rect x="658" y="117" width="18" height="16" rx="3" fill="#d8d8d8"/><rect x="705" y="117" width="18" height="16" rx="3" fill="#d8d8d8"/><rect x="752" y="117" width="18" height="16" rx="3" fill="#d8d8d8"/><rect x="800" y="117" width="18" height="16" rx="3" fill="#d8d8d8"/><rect x="846" y="117" width="18" height="16" rx="3" fill="#d8d8d8"/><rect x="272" y="198" width="170" height="14" fill="#e0392e"/><rect x="452" y="202" width="225" height="8" fill="#e8675e"/><rect x="277" y="234" width="215" height="7" fill="#555"/><rect x="277" y="258" width="135" height="7" fill="#777"/><rect x="293" y="272" width="74" height="80" fill="#262626"/><rect x="301" y="318" width="28" height="12" fill="#d84848"/><rect x="377" y="272" width="74" height="80" fill="#262626"/><rect x="385" y="318" width="28" height="12" fill="#d84848"/><rect x="670" y="272" width="74" height="80" fill="#262626"/><rect x="678" y="318" width="28" height="12" fill="#d84848"/><rect x="755" y="272" width="74" height="80" fill="#262626"/><rect x="763" y="318" width="28" height="12" fill="#d84848"/><rect x="472" y="274" width="118" height="8" fill="#e8675e"/><rect x="474" y="296" width="150" height="6" fill="#666"/><rect x="474" y="311" width="176" height="6" fill="#666"/><rect x="655" y="258" width="170" height="6" fill="#888"/><rect x="858" y="258" width="40" height="6" fill="#555"/><rect x="980" y="258" width="120" height="5" fill="#999"/><rect x="1010" y="268" width="90" height="5" fill="#999"/><rect x="866" y="286" width="46" height="22" fill="#888"/><rect x="926" y="286" width="46" height="22" fill="#888"/><rect x="866" y="314" width="136" height="7" fill="#777"/><rect x="866" y="328" width="160" height="7" fill="#888"/><rect x="866" y="344" width="150" height="8" fill="#777"/><rect x="1135" y="210" width="150" height="6" fill="#555"/><path d="M1170 242 a9 11 0 1 1 0.1 0 M1158 268 L1184 266 L1180 312 L1194 362 L1186 364 L1172 318 L1164 364 L1156 362 L1162 312 Z" fill="#2a2426"/><path d="M1270 242 a9 11 0 1 1 0.1 0 M1258 268 L1284 266 L1280 312 L1294 362 L1286 364 L1272 318 L1264 364 L1256 362 L1262 312 Z" fill="#b8b8b8"/><path d="M1358 242 a9 11 0 1 1 0.1 0 M1346 268 L1372 266 L1368 312 L1382 362 L1374 364 L1360 318 L1352 364 L1344 362 L1350 312 Z" fill="#c4c4c4"/><path d="M1450 242 a9 11 0 1 1 0.1 0 M1438 268 L1464 266 L1460 312 L1474 362 L1466 364 L1452 318 L1444 364 L1436 362 L1442 312 Z" fill="#b4b4d8"/><path d="M1542 242 a9 11 0 1 1 0.1 0 M1530 268 L1556 266 L1552 312 L1566 362 L1558 364 L1544 318 L1536 364 L1528 362 L1534 312 Z" fill="#9a9a9a"/><path d="M1632 242 a9 11 0 1 1 0.1 0 M1620 268 L1646 266 L1642 312 L1656 362 L1648 364 L1634 318 L1626 364 L1618 362 L1624 312 Z" fill="#e6c8e0"/><rect x="1156" y="262" width="30" height="22" fill="#f0b0c4"/><rect x="1150" y="284" width="40" height="26" fill="#1a1a1a"/><rect x="358" y="450" width="180" height="298" fill="#dcdedf"/><circle cx="446" cy="495" r="17" fill="#241c1c"/><ellipse cx="446" cy="502" rx="11" ry="13" fill="#f0ddd2"/><path d="M422 522 H468 L464 568 H426 Z" fill="#f6f6f6"/><path d="M438 518 h16 l-8 14 z" fill="#1c2a24"/><path d="M424 566 H466 L488 622 H402 Z" fill="#1b1b1d"/><path d="M430 622 L438 712 L448 712 L444 622 Z M450 622 L470 708 L480 705 L466 622 Z" fill="#ecd8cc"/><ellipse cx="442" cy="724" rx="14" ry="9" fill="#222"/><ellipse cx="480" cy="718" rx="14" ry="9" fill="#222"/><rect x="1035" y="453" width="180" height="297" fill="#dcdedf"/><circle cx="1123" cy="498" r="17" fill="#241c1c"/><ellipse cx="1123" cy="505" rx="11" ry="13" fill="#f0ddd2"/><path d="M1099 525 H1145 L1141 571 H1103 Z" fill="#f6f6f6"/><path d="M1115 521 h16 l-8 14 z" fill="#1c2a24"/><path d="M1101 569 H1143 L1165 625 H1079 Z" fill="#1b1b1d"/><path d="M1107 625 L1115 715 L1125 715 L1121 625 Z M1127 625 L1147 711 L1157 708 L1143 625 Z" fill="#ecd8cc"/><ellipse cx="1119" cy="727" rx="14" ry="9" fill="#222"/><ellipse cx="1157" cy="721" rx="14" ry="9" fill="#222"/><rect x="352" y="868" width="180" height="269" fill="#dcdedf"/><circle cx="440" cy="913" r="17" fill="#241c1c"/><ellipse cx="440" cy="920" rx="11" ry="13" fill="#f0ddd2"/><path d="M416 940 H462 L458 986 H420 Z" fill="#f6f6f6"/><path d="M432 936 h16 l-8 14 z" fill="#1c2a24"/><path d="M418 984 H460 L482 1040 H396 Z" fill="#1b1b1d"/><path d="M424 1040 L432 1130 L442 1130 L438 1040 Z M444 1040 L464 1126 L474 1123 L460 1040 Z" fill="#ecd8cc"/><rect x="1038" y="868" width="180" height="269" fill="#dcdedf"/><circle cx="1126" cy="913" r="17" fill="#241c1c"/><ellipse cx="1126" cy="920" rx="11" ry="13" fill="#f0ddd2"/><path d="M1102 940 H1148 L1144 986 H1106 Z" fill="#f6f6f6"/><path d="M1118 936 h16 l-8 14 z" fill="#1c2a24"/><path d="M1104 984 H1146 L1168 1040 H1082 Z" fill="#1b1b1d"/><path d="M1110 1040 L1118 1130 L1128 1130 L1124 1040 Z M1130 1040 L1150 1126 L1160 1123 L1146 1040 Z" fill="#ecd8cc"/><rect x="2005" y="152" width="300" height="1203" fill="#272727"/><rect x="2012" y="158" width="22" height="22" fill="#2c7be0"/><rect x="2028" y="176" width="22" height="22" fill="#f0c020"/></g>
<g transform="translate(670,1280) scale(0.21008)"><path d="M2126.7 190.9 A106 106 0 0 1 2183.3 190.9" stroke="#ff2a2a" stroke-width="19" fill="none"/><path d="M2181.5 190.4 A106 106 0 0 1 2230.6 218.7" stroke="#ff8a1e" stroke-width="19" fill="none"/><path d="M2229.3 217.4 A106 106 0 0 1 2257.6 266.5" stroke="#ffe81e" stroke-width="19" fill="none"/><path d="M2257.1 264.7 A106 106 0 0 1 2257.1 321.3" stroke="#9aff1e" stroke-width="19" fill="none"/><path d="M2257.6 319.5 A106 106 0 0 1 2229.3 368.6" stroke="#1eff3c" stroke-width="19" fill="none"/><path d="M2230.6 367.3 A106 106 0 0 1 2181.5 395.6" stroke="#1effb4" stroke-width="19" fill="none"/><path d="M2183.3 395.1 A106 106 0 0 1 2126.7 395.1" stroke="#1ee0ff" stroke-width="19" fill="none"/><path d="M2128.5 395.6 A106 106 0 0 1 2079.4 367.3" stroke="#1e78ff" stroke-width="19" fill="none"/><path d="M2080.7 368.6 A106 106 0 0 1 2052.4 319.5" stroke="#4a1eff" stroke-width="19" fill="none"/><path d="M2052.9 321.3 A106 106 0 0 1 2052.9 264.7" stroke="#b41eff" stroke-width="19" fill="none"/><path d="M2052.4 266.5 A106 106 0 0 1 2080.7 217.4" stroke="#ff1ee0" stroke-width="19" fill="none"/><path d="M2079.4 218.7 A106 106 0 0 1 2128.5 190.4" stroke="#ff1e78" stroke-width="19" fill="none"/><defs><linearGradient id="sq1" x1="0" y1="0" x2="1" y2="0"><stop offset="0" stop-color="#fff"/><stop offset="1" stop-color="#2a62e0"/></linearGradient><linearGradient id="sq2" x1="0" y1="0" x2="0" y2="1"><stop offset="0" stop-color="#000" stop-opacity="0"/><stop offset="1" stop-color="#000"/></linearGradient></defs><rect x="2097" y="235" width="116" height="116" fill="url(#sq1)"/><rect x="2097" y="235" width="116" height="116" fill="url(#sq2)"/><circle cx="2030" cy="438" r="20" fill="#2a2f5a" stroke="#4a5ab8" stroke-width="3"/><circle cx="2082" cy="438" r="17" fill="#303030"/><circle cx="2082" cy="436" r="4" fill="#ddd"/><circle cx="2132" cy="438" r="17" fill="#303030"/><circle cx="2132" cy="436" r="4" fill="#ddd"/><circle cx="2182" cy="438" r="17" fill="#303030"/><circle cx="2182" cy="436" r="4" fill="#ddd"/><circle cx="2232" cy="438" r="17" fill="#303030"/><circle cx="2232" cy="436" r="4" fill="#ddd"/><circle cx="2280" cy="438" r="17" fill="#303030"/><circle cx="2280" cy="436" r="4" fill="#ddd"/><rect x="2012" y="480" width="50" height="11" fill="#8a8a8a" opacity="0.7"/><rect x="2112" y="483" width="150" height="6" rx="3" fill="#4a4a4a"/><rect x="2112" y="483" width="18" height="6" rx="3" fill="#9a9a9a"/><rect x="2276" y="481" width="18" height="10" fill="#c8c8c8"/><rect x="2012" y="506" width="44" height="11" fill="#8a8a8a" opacity="0.7"/><rect x="2112" y="509" width="150" height="6" rx="3" fill="#4a4a4a"/><rect x="2112" y="509" width="6" height="6" rx="3" fill="#9a9a9a"/><rect x="2276" y="507" width="18" height="10" fill="#c8c8c8"/><rect x="2012" y="534" width="44" height="11" fill="#8a8a8a" opacity="0.7"/><rect x="2112" y="537" width="150" height="6" rx="3" fill="#4a4a4a"/><rect x="2112" y="537" width="138" height="6" rx="3" fill="#9a9a9a"/><rect x="2276" y="535" width="18" height="10" fill="#c8c8c8"/><rect x="2012" y="562" width="44" height="11" fill="#8a8a8a" opacity="0.7"/><rect x="2112" y="565" width="150" height="6" rx="3" fill="#4a4a4a"/><rect x="2112" y="565" width="138" height="6" rx="3" fill="#9a9a9a"/><rect x="2276" y="563" width="18" height="10" fill="#c8c8c8"/><rect x="2012" y="589" width="44" height="11" fill="#8a8a8a" opacity="0.7"/><rect x="2112" y="592" width="150" height="6" rx="3" fill="#4a4a4a"/><rect x="2112" y="592" width="53" height="6" rx="3" fill="#9a9a9a"/><rect x="2276" y="590" width="18" height="10" fill="#c8c8c8"/><rect x="2085" y="478" width="16" height="16" rx="3" fill="#3a6ae0"/><circle cx="2128" cy="637" r="16" fill="#9a9a9a"/><rect x="2012" y="632" width="56" height="10" fill="#777"/><rect x="2166" y="620" width="60" height="9" fill="#777"/><rect x="2166" y="648" width="126" height="6" rx="3" fill="#8a8a8a"/><rect x="2012" y="664" width="284" height="26" rx="4" fill="#333"/><rect x="2076" y="672" width="156" height="10" fill="#bdbdbd"/><rect x="2040" y="716" width="76" height="9" fill="#aaa"/><rect x="2186" y="710" width="96" height="20" rx="4" fill="#3a3a3a"/><rect x="2070" y="748" width="170" height="7" fill="#666"/><rect x="2040" y="775" width="52" height="8" fill="#999"/><rect x="2016" y="792" width="134" height="66" rx="4" fill="#303030"/><path d="M2032 820 C2056 796 2086 836 2134 806 C2100 850 2066 806 2032 830 Z" fill="#d4d4d4"/><rect x="2016" y="864" width="134" height="28" rx="4" fill="#2c2c2c"/><rect x="2158" y="792" width="134" height="66" rx="4" fill="#303030"/><path d="M2174 820 C2198 796 2228 836 2276 806 C2242 850 2208 806 2174 830 Z" fill="#d4d4d4"/><rect x="2158" y="864" width="134" height="28" rx="4" fill="#2c2c2c"/><rect x="2012" y="902" width="44" height="9" fill="#bbb"/><rect x="2176" y="898" width="116" height="18" rx="4" fill="#333"/><rect x="2012" y="929" width="14" height="13" fill="#8d8d8d"/><rect x="2041" y="929" width="14" height="13" fill="#8d8d8d"/><rect x="2070" y="929" width="14" height="13" fill="#8d8d8d"/><rect x="2099" y="929" width="14" height="13" fill="#8d8d8d"/><rect x="2128" y="929" width="14" height="13" fill="#8d8d8d"/><rect x="2157" y="929" width="14" height="13" fill="#8d8d8d"/><rect x="2186" y="929" width="14" height="13" fill="#8d8d8d"/><rect x="2215" y="929" width="14" height="13" fill="#8d8d8d"/><rect x="2244" y="929" width="14" height="13" fill="#8d8d8d"/><rect x="2273" y="929" width="14" height="13" fill="#8d8d8d"/><rect x="2012" y="958" width="66" height="10" fill="#555"/><rect x="2150" y="961" width="112" height="5" fill="#555"/><rect x="2008" y="988.0" width="292" height="50" fill="#3a3a3a"/><rect x="2042" y="992.0" width="46" height="42" fill="#d8d8d8"/><rect x="2096" y="997.0" width="60" height="10" fill="#b8b8b8"/><rect x="2096" y="1018.0" width="170" height="7" fill="#666"/><rect x="2016" y="996.0" width="12" height="12" fill="#999"/><rect x="2016" y="1018.0" width="12" height="12" fill="#999"/><rect x="2008" y="1040.5" width="292" height="50" fill="#3a3a3a"/><rect x="2042" y="1044.5" width="46" height="42" fill="#d8d8d8"/><rect x="2096" y="1049.5" width="150" height="10" fill="#b8b8b8"/><rect x="2096" y="1070.5" width="170" height="7" fill="#666"/><rect x="2016" y="1048.5" width="12" height="12" fill="#999"/><rect x="2016" y="1070.5" width="12" height="12" fill="#999"/><rect x="2008" y="1093.0" width="292" height="50" fill="#2b2b2b"/><rect x="2042" y="1097.0" width="46" height="42" fill="#1c1c1c"/><rect x="2096" y="1102.0" width="20" height="10" fill="#b8b8b8"/><rect x="2096" y="1123.0" width="170" height="7" fill="#666"/><rect x="2016" y="1101.0" width="12" height="12" fill="#999"/><rect x="2016" y="1123.0" width="12" height="12" fill="#999"/><rect x="2008" y="1145.5" width="292" height="50" fill="#2b2b2b"/><rect x="2042" y="1149.5" width="46" height="42" fill="#d8d8d8"/><rect x="2096" y="1154.5" width="120" height="10" fill="#b8b8b8"/><rect x="2096" y="1175.5" width="170" height="7" fill="#666"/><rect x="2016" y="1153.5" width="12" height="12" fill="#999"/><rect x="2016" y="1175.5" width="12" height="12" fill="#999"/><rect x="2008" y="1198.0" width="292" height="50" fill="#2b2b2b"/><rect x="2042" y="1202.0" width="46" height="42" fill="#1c1c1c"/><rect x="2096" y="1207.0" width="20" height="10" fill="#b8b8b8"/><rect x="2096" y="1228.0" width="170" height="7" fill="#666"/><rect x="2016" y="1206.0" width="12" height="12" fill="#999"/><rect x="2016" y="1228.0" width="12" height="12" fill="#999"/><rect x="2008" y="1250.5" width="292" height="50" fill="#2b2b2b"/><rect x="2042" y="1254.5" width="46" height="42" fill="#d8d8d8"/><rect x="2096" y="1259.5" width="110" height="10" fill="#b8b8b8"/><rect x="2096" y="1280.5" width="170" height="7" fill="#666"/><rect x="2016" y="1258.5" width="12" height="12" fill="#999"/><rect x="2016" y="1280.5" width="12" height="12" fill="#999"/><rect x="2008" y="1303.0" width="292" height="50" fill="#2b2b2b"/><rect x="2042" y="1307.0" width="46" height="42" fill="#1c1c1c"/><rect x="2096" y="1312.0" width="20" height="10" fill="#b8b8b8"/><rect x="2096" y="1333.0" width="170" height="7" fill="#666"/><rect x="2016" y="1311.0" width="12" height="12" fill="#999"/><rect x="2016" y="1333.0" width="12" height="12" fill="#999"/><rect x="2004" y="985" width="5" height="370" fill="#5a5a5a"/><rect x="1705" y="1020" width="290" height="65" rx="4" fill="#5bc832"/><rect x="1718" y="1035" width="234" height="9" fill="#c8f0b4"/><rect x="1718" y="1058" width="76" height="9" fill="#c8f0b4"/><rect x="1802" y="1052" width="68" height="20" rx="3" fill="#e8f8e0"/><rect x="1952" y="1090" width="40" height="36" rx="4" fill="#2a2a2a"/><rect x="1964" y="1100" width="16" height="14" fill="#eee"/><rect x="90" y="1140" width="1910" height="170" fill="#1c1c1c"/><rect x="95" y="1142" width="236" height="160" fill="#1e3a72"/><rect x="150" y="1170" width="126" height="128" fill="#fff"/><rect x="108" y="1152" width="40" height="8" fill="#9ab"/><rect x="338" y="1142" width="236" height="160" fill="#2c2c2c"/><rect x="395" y="1170" width="126" height="128" fill="#fff"/><rect x="348" y="1152" width="80" height="8" fill="#999"/><rect x="580" y="1142" width="236" height="160" fill="#2e2e2e"/><path d="M686 1226 H712 M699 1213 V1239" stroke="#cfcfcf" stroke-width="5"/><rect x="172" y="1182" width="10" height="24" fill="#555"/><rect x="222" y="1182" width="10" height="24" fill="#555"/><rect x="172" y="1220" width="10" height="24" fill="#555"/><rect x="222" y="1220" width="10" height="24" fill="#555"/><rect x="172" y="1258" width="10" height="24" fill="#555"/><rect x="222" y="1258" width="10" height="24" fill="#555"/><rect x="407" y="1182" width="10" height="24" fill="#555"/><rect x="435" y="1182" width="10" height="24" fill="#555"/><rect x="463" y="1182" width="10" height="24" fill="#555"/><rect x="491" y="1182" width="10" height="24" fill="#555"/><rect x="407" y="1220" width="10" height="24" fill="#555"/><rect x="435" y="1220" width="10" height="24" fill="#555"/><rect x="463" y="1220" width="10" height="24" fill="#555"/><rect x="491" y="1220" width="10" height="24" fill="#555"/><rect x="407" y="1258" width="10" height="24" fill="#555"/><rect x="435" y="1258" width="10" height="24" fill="#555"/><rect x="463" y="1258" width="10" height="24" fill="#555"/><rect x="491" y="1258" width="10" height="24" fill="#555"/><rect x="90" y="1310" width="1910" height="45" fill="#1f1f1f"/><rect x="1585" y="1332" width="216" height="8" fill="#666"/><rect x="1836" y="1332" width="150" height="8" fill="#333"/><rect x="54" y="1322" width="24" height="18" rx="3" fill="#555"/><rect x="98" y="1108" width="50" height="10" fill="#777"/></g>
<g transform="translate(1502.6,1078.3) scale(1.0227)"><defs><linearGradient id="bl" x1="0" y1="0" x2="1" y2="0"><stop offset="0" stop-color="#d9a728"/><stop offset="0.3" stop-color="#ecd048"/><stop offset="0.65" stop-color="#c29a2a"/><stop offset="1" stop-color="#a87c18"/></linearGradient></defs><circle cx="22" cy="37.500" r="5" fill="#b07818"/><path d="M22 2 C31 2 35 10 35.500 19 C36 28 39 31 43 34 C44 36 43 37 41 37 H3 C1 37.500 0 36 1 34 C5 31 8 28 8.500 19 C9 10 13 2 22 2 Z" fill="url(#bl)"/><circle cx="22" cy="3" r="2.600" fill="#d9a21e"/></g>
<use href="#strip" transform="translate(1651.8,1076.7) scale(0.39332)"/>
<g transform="translate(3403.5,1078.6) scale(0.7419)"><g transform="translate(0.8,59.1) rotate(-45.5)"><defs><linearGradient id="bh3" x1="0" y1="0" x2="0" y2="1"><stop offset="0" stop-color="#2a3fb0"/><stop offset="0.3" stop-color="#8ea6f4"/><stop offset="0.55" stop-color="#2c47c4"/><stop offset="1" stop-color="#141f78"/></linearGradient><linearGradient id="bo3" x1="0" y1="0" x2="0" y2="1"><stop offset="0" stop-color="#f3a83a"/><stop offset="1" stop-color="#b9660f"/></linearGradient></defs><path d="M0 0 C5 -6.500 12 -6.500 18 -3.500 V3.500 C12 6.500 5 5.500 0 0 Z" fill="url(#bo3)"/><path d="M17 -6.200 H26 V6.800 H17 Z" fill="#8b9094" stroke="#5c6064" stroke-width="0.800"/><path d="M25 -6.200 V6.800" stroke="#e4e7ea" stroke-width="1.200"/><path d="M26 -5.500 C40 -7.500 60 -9.500 72 -8.500 C80 -7.500 83 -3 83 0 C83 4 80 7.500 72 8 C58 8.500 40 7 26 5.500 Z" fill="url(#bh3)"/></g></g>
<g transform="translate(2640,1000) scale(0.46219)"><rect x="253" y="465" width="492" height="562" fill="#222"/><path d="M283 484 l9 9 l9 -9" fill="none" stroke="#cfcfcf" stroke-width="3"/><text x="315" y="496" font-size="21" fill="#9c9c9c" textLength="113" font-family='Liberation Sans,Noto Sans CJK SC,sans-serif'>素描和粉笔</text><rect x="265" y="515" width="226" height="95" rx="4" fill="#2e2e2e"/><path d="M300.0 555.0 C325.0 527.0 360.0 523.0 390.0 539.0 C415.0 551.0 440.0 549.0 457.0 531.0 C453.0 561.0 425.0 577.0 393.0 567.0 C365.0 555.0 335.0 553.0 300.0 555.0 Z" fill="#d4d4d4" opacity="0.9"/><text x="378" y="603" font-size="16.500" fill="#f0f0f0" text-anchor="middle" font-family='Liberation Sans,Noto Sans CJK SC,sans-serif'>草图圆形</text><rect x="500" y="515" width="226" height="95" rx="4" fill="#2e2e2e"/><path d="M535.0 555.0 C560.0 527.0 595.0 523.0 625.0 539.0 C650.0 551.0 675.0 549.0 692.0 531.0 C688.0 561.0 660.0 577.0 628.0 567.0 C600.0 555.0 570.0 553.0 535.0 555.0 Z" fill="#d4d4d4" opacity="0.9"/><text x="613" y="603" font-size="16.500" fill="#f0f0f0" text-anchor="middle" font-family='Liberation Sans,Noto Sans CJK SC,sans-serif'>草图2</text><rect x="265" y="618" width="226" height="95" rx="4" fill="#2e2e2e"/><path d="M300.0 658.0 C325.0 630.0 360.0 626.0 390.0 642.0 C415.0 654.0 440.0 652.0 457.0 634.0 C443.9 655.6 418.0 661.8 390.9 650.4 C361.5 635.6 328.0 637.8 300.0 658.0 Z" fill="#d4d4d4" opacity="0.85"/><text x="378" y="706" font-size="16.500" fill="#f0f0f0" text-anchor="middle" font-family='Liberation Sans,Noto Sans CJK SC,sans-serif'>铅笔</text><rect x="500" y="618" width="226" height="95" rx="4" fill="#2e2e2e"/><path d="M535.0 658.0 C560.0 630.0 595.0 626.0 625.0 642.0 C650.0 654.0 675.0 652.0 692.0 634.0 C678.2 655.0 652.5 660.5 625.8 649.0 C596.2 634.0 562.5 636.5 535.0 658.0 Z" fill="#d4d4d4" opacity="0.45"/><text x="613" y="706" font-size="16.500" fill="#f0f0f0" text-anchor="middle" font-family='Liberation Sans,Noto Sans CJK SC,sans-serif'>粉蜡笔</text><rect x="265" y="720" width="226" height="95" rx="4" fill="#2e2e2e"/><path d="M300.0 760.0 C325.0 732.0 360.0 728.0 390.0 744.0 C415.0 756.0 440.0 754.0 457.0 736.0 C441.8 755.7 416.4 759.6 390.4 747.9 C360.7 732.5 326.4 735.6 300.0 760.0 Z" fill="#d4d4d4" opacity="0.6"/><text x="378" y="808" font-size="16.500" fill="#f0f0f0" text-anchor="middle" font-family='Liberation Sans,Noto Sans CJK SC,sans-serif'>细的石墨</text><rect x="500" y="720" width="226" height="95" rx="4" fill="#27346a"/><path d="M535.0 760.0 C560.0 732.0 595.0 728.0 625.0 744.0 C650.0 756.0 675.0 754.0 692.0 736.0 C688.0 766.0 660.0 782.0 628.0 772.0 C600.0 760.0 570.0 758.0 535.0 760.0 Z" fill="#d4d4d4" opacity="0.95"/><text x="613" y="808" font-size="16.500" fill="#f0f0f0" text-anchor="middle" font-family='Liberation Sans,Noto Sans CJK SC,sans-serif'>Round Opacity</text><rect x="265" y="822" width="226" height="95" rx="4" fill="#2e2e2e"/><path d="M300.0 862.0 C325.0 834.0 360.0 830.0 390.0 846.0 C415.0 858.0 440.0 856.0 457.0 838.0 C453.0 868.0 425.0 884.0 393.0 874.0 C365.0 862.0 335.0 860.0 300.0 862.0 Z" fill="#d4d4d4" opacity="0.92"/><text x="378" y="910" font-size="16.500" fill="#f0f0f0" text-anchor="middle" font-family='Liberation Sans,Noto Sans CJK SC,sans-serif'>Egg Opacity</text><rect x="500" y="822" width="226" height="95" rx="4" fill="#2e2e2e"/><path d="M535.0 862.0 C560.0 834.0 595.0 830.0 625.0 846.0 C650.0 858.0 675.0 856.0 692.0 838.0 C688.6 868.6 660.5 885.3 628.1 875.4 C600.2 863.6 570.5 861.3 535.0 862.0 Z" fill="#d4d4d4" opacity="0.55"/><text x="613" y="910" font-size="16.500" fill="#f0f0f0" text-anchor="middle" font-family='Liberation Sans,Noto Sans CJK SC,sans-serif'>粉笔1</text><rect x="265" y="925" width="226" height="95" rx="4" fill="#2e2e2e"/><path d="M300.0 965.0 C325.0 937.0 360.0 933.0 390.0 949.0 C415.0 961.0 440.0 959.0 457.0 941.0 C452.4 970.4 424.5 985.7 392.9 975.6 C364.8 963.4 334.5 961.7 300.0 965.0 Z" fill="#d4d4d4" opacity="0.7"/><text x="378" y="1013" font-size="16.500" fill="#f0f0f0" text-anchor="middle" font-family='Liberation Sans,Noto Sans CJK SC,sans-serif'>粉笔2</text><rect x="500" y="925" width="226" height="95" rx="4" fill="#2e2e2e"/><path d="M535.0 965.0 C560.0 937.0 595.0 933.0 625.0 949.0 C650.0 961.0 675.0 959.0 692.0 941.0 C687.4 970.4 659.5 985.7 627.9 975.6 C599.8 963.4 569.5 961.7 535.0 965.0 Z" fill="#d4d4d4" opacity="0.5"/><text x="613" y="1013" font-size="16.500" fill="#f0f0f0" text-anchor="middle" font-family='Liberation Sans,Noto Sans CJK SC,sans-serif'>粉笔3</text><rect x="485" y="709" width="246" height="119" fill="none" stroke="#e3242b" stroke-width="5"/><rect x="731" y="585" width="8" height="110" rx="4" fill="#4a4a4a"/></g>
<g transform="translate(2640,1000) scale(0.46219)"><rect x="825" y="470" width="580" height="550" fill="#222"/><circle cx="880" cy="520" r="40" fill="#262b58" stroke="#4553b4" stroke-width="3"/><path d="M894 500 L878 520 M875 523 c-5 -2 -10 2 -10 9 c6 0 12 -2 10 -9" stroke="#f0f0f0" stroke-width="6" stroke-linecap="round" fill="#f0f0f0"/><circle cx="904" cy="546" r="15" fill="#f0f0f0"/><text x="904" y="554" font-size="22" font-weight="700" fill="#222" text-anchor="middle" font-family='Liberation Sans,Noto Sans CJK SC,sans-serif'>1</text><circle cx="975" cy="520" r="40" fill="#2b2b2b"/><path d="M989 500 L973 520 M970 523 c-5 -2 -10 2 -10 9 c6 0 12 -2 10 -9" stroke="#f0f0f0" stroke-width="6" stroke-linecap="round" fill="#f0f0f0"/><text x="999" y="554" font-size="20" font-weight="700" fill="#e4e4e4" text-anchor="middle" font-family='Liberation Sans,Noto Sans CJK SC,sans-serif'>2</text><circle cx="1070" cy="520" r="40" fill="#2b2b2b"/><path d="M1084 500 L1068 520 M1065 523 c-5 -2 -10 2 -10 9 c6 0 12 -2 10 -9" stroke="#f0f0f0" stroke-width="6" stroke-linecap="round" fill="#f0f0f0"/><text x="1094" y="554" font-size="20" font-weight="700" fill="#e4e4e4" text-anchor="middle" font-family='Liberation Sans,Noto Sans CJK SC,sans-serif'>3</text><circle cx="1162" cy="520" r="40" fill="#2b2b2b"/><path d="M1150 518 h24 M1162 506 v24" stroke="#f0f0f0" stroke-width="4.500"/><text x="1186" y="554" font-size="20" font-weight="700" fill="#e4e4e4" text-anchor="middle" font-family='Liberation Sans,Noto Sans CJK SC,sans-serif'>4</text><circle cx="1258" cy="520" r="40" fill="#2b2b2b"/><path d="M1272 500 L1256 520 M1253 523 c-5 -2 -10 2 -10 9 c6 0 12 -2 10 -9" stroke="#f0f0f0" stroke-width="6" stroke-linecap="round" fill="#f0f0f0"/><text x="1282" y="554" font-size="20" font-weight="700" fill="#e4e4e4" text-anchor="middle" font-family='Liberation Sans,Noto Sans CJK SC,sans-serif'>5</text><circle cx="1350" cy="520" r="40" fill="#2b2b2b"/><path d="M1338 518 h24 M1350 506 v24" stroke="#f0f0f0" stroke-width="4.500"/><text x="1374" y="554" font-size="20" font-weight="700" fill="#e4e4e4" text-anchor="middle" font-family='Liberation Sans,Noto Sans CJK SC,sans-serif'>6</text><rect x="832" y="590" width="110" height="42" rx="4" fill="#303030"/><text x="840" y="620" font-size="23" fill="#e8e8e8" font-family='Liberation Sans,Noto Sans CJK SC,sans-serif'>尺寸 x1</text><rect x="1035" y="608" width="285" height="8" rx="4" fill="#3c3c3c"/><rect x="1035" y="608" width="13" height="8" rx="4" fill="#9a9a9a"/><circle cx="1048" cy="612" r="10" fill="#2a2a2a" stroke="#b4b4b4" stroke-width="3"/><text x="1383" y="621" font-size="24" fill="#e8e8e8" text-anchor="end" font-family='Liberation Sans,Noto Sans CJK SC,sans-serif'>2.6</text><text x="840" y="673" font-size="23" fill="#8e8e8e" font-family='Liberation Sans,Noto Sans CJK SC,sans-serif'>最小尺寸</text><rect x="1035" y="661" width="285" height="8" rx="4" fill="#3c3c3c"/><rect x="1035" y="661" width="102" height="8" rx="4" fill="#9a9a9a"/><circle cx="1137" cy="665" r="10" fill="#2a2a2a" stroke="#b4b4b4" stroke-width="3"/><text x="1383" y="674" font-size="24" fill="#e8e8e8" text-anchor="end" font-family='Liberation Sans,Noto Sans CJK SC,sans-serif'>35</text><text x="840" y="726" font-size="23" fill="#8e8e8e" font-family='Liberation Sans,Noto Sans CJK SC,sans-serif'>流</text><rect x="1035" y="714" width="285" height="8" rx="4" fill="#3c3c3c"/><rect x="1035" y="714" width="104" height="8" rx="4" fill="#9a9a9a"/><circle cx="1139" cy="718" r="10" fill="#2a2a2a" stroke="#b4b4b4" stroke-width="3"/><text x="1383" y="727" font-size="24" fill="#e8e8e8" text-anchor="end" font-family='Liberation Sans,Noto Sans CJK SC,sans-serif'>36</text><text x="840" y="780" font-size="23" fill="#8e8e8e" font-family='Liberation Sans,Noto Sans CJK SC,sans-serif'>透明度</text><rect x="1035" y="768" width="285" height="8" rx="4" fill="#3c3c3c"/><rect x="1035" y="768" width="273" height="8" rx="4" fill="#9a9a9a"/><circle cx="1308" cy="772" r="10" fill="#2a2a2a" stroke="#b4b4b4" stroke-width="3"/><text x="1383" y="781" font-size="24" fill="#e8e8e8" text-anchor="end" font-family='Liberation Sans,Noto Sans CJK SC,sans-serif'>100</text><text x="840" y="833" font-size="23" fill="#8e8e8e" font-family='Liberation Sans,Noto Sans CJK SC,sans-serif'>稳定器</text><rect x="1035" y="821" width="285" height="8" rx="4" fill="#3c3c3c"/><rect x="1035" y="821" width="20" height="8" rx="4" fill="#9a9a9a"/><circle cx="1055" cy="825" r="10" fill="#2a2a2a" stroke="#b4b4b4" stroke-width="3"/><text x="1383" y="834" font-size="24" fill="#e8e8e8" text-anchor="end" font-family='Liberation Sans,Noto Sans CJK SC,sans-serif'>3</text><rect x="978" y="590" width="43" height="43" rx="5" fill="#3558c8" stroke="#6b86e8" stroke-width="2"/><circle cx="999" cy="612" r="9" fill="none" stroke="#fff" stroke-width="3"/><circle cx="999" cy="612" r="3" fill="#fff"/><path d="M1003 608 l8 -8" stroke="#fff" stroke-width="3"/><circle cx="999" cy="718" r="9" fill="none" stroke="#f0f0f0" stroke-width="3"/><circle cx="999" cy="718" r="3" fill="#f0f0f0"/><path d="M1003 714 l8 -8" stroke="#f0f0f0" stroke-width="3"/><rect x="978" y="750" width="43" height="43" rx="5" fill="#3558c8" stroke="#6b86e8" stroke-width="2"/><circle cx="999" cy="772" r="9" fill="none" stroke="#fff" stroke-width="3"/><circle cx="999" cy="772" r="3" fill="#fff"/><path d="M1003 768 l8 -8" stroke="#fff" stroke-width="3"/><rect x="946" y="738" width="97" height="76" fill="none" stroke="#e3242b" stroke-width="4"/><text x="840" y="914" font-size="23" fill="#8e8e8e" font-family='Liberation Sans,Noto Sans CJK SC,sans-serif'>笔尖形状</text><rect x="1030" y="866" width="72" height="70" rx="6" fill="#2e2e2e"/><circle cx="1065" cy="900" r="29" fill="#a0a0a0"/><circle cx="1035" cy="872" r="47" fill="none" stroke="#dcdcdc" stroke-width="1.600"/><text x="1138" y="889" font-size="23" fill="#8e8e8e" font-family='Liberation Sans,Noto Sans CJK SC,sans-serif'>硬度</text><text x="1385" y="889" font-size="24" fill="#e8e8e8" text-anchor="end" font-family='Liberation Sans,Noto Sans CJK SC,sans-serif'>100</text><rect x="1143" y="924" width="240" height="8" rx="4" fill="#9a9a9a"/><circle cx="1375" cy="928" r="10" fill="#2a2a2a" stroke="#b4b4b4" stroke-width="3"/><rect x="838" y="958" width="554" height="40" rx="5" fill="#2e2e2e"/><text x="1115" y="986" font-size="23" font-weight="700" fill="#f0f0f0" text-anchor="middle" font-family='Liberation Sans,Noto Sans CJK SC,sans-serif'>打开高级设置</text></g>
<g transform="translate(2640,1000) scale(0.46219)"><g fill="none" stroke="#5e5e5e" stroke-opacity="0.62" stroke-linecap="round"><ellipse cx="1668" cy="535" rx="36" ry="48" fill="#6a6a6a" fill-opacity="0.7" stroke="none" transform="rotate(-8 1668 535)"/><path d="M1600 640 H1735 V770 H1600 Z" fill="#8a8a8a" fill-opacity="0.5" stroke="none"/><path d="M1588 645 H1742" stroke-width="52"/><path d="M1590 648 L1622 935" stroke-width="50"/><path d="M1740 648 L1708 800" stroke-width="46"/><path d="M1626 935 L1722 792" stroke-width="44"/><path d="M1870 640 C1900 610 1990 610 2010 640 L1985 820 H1880 Z" fill="#8a8a8a" fill-opacity="0.55" stroke="none"/><path d="M1895 650 V760 M1945 650 V780 M1985 660 V800" stroke-width="40" stroke-opacity="0.25"/><path d="M1778 885 L2098 642" stroke-width="46"/></g></g>
<use href="#strip" transform="translate(1651.8,1722.7) scale(0.39332)"/>
<g transform="translate(2748.8,1724.6) scale(1.0050)"><path d="M2 1 H24 L38 15 V42 H2 Z" fill="#e6e6e6" stroke="#c8c8c8" stroke-width="1"/><path d="M24 1 V15 H38 Z" fill="#c9c9c9"/><path d="M7 10 H19 M7 16 H20 M7 22 H32 M7 27 H32 M7 32 H32 M7 37 H26" stroke="#cfcfcf" stroke-width="1.6"/></g>
</svg>
<span class="t" style='left:312.8px;top:105.1px;font-size:22px;line-height:22px;color:#dedede;font-weight:700;letter-spacing:-0.236px;'>AutoSave</span>
<span class="t" style='left:919.2px;top:103.9px;font-size:24px;line-height:24px;color:#2d5f8a;'>A</span>
<span class="t" style='left:1673.3px;top:119.2px;font-size:13px;line-height:13px;color:#fff;font-weight:700;'>P</span>
<span class="t" style='left:1710.4px;top:104.0px;font-size:25px;line-height:25px;color:#f4f4f4;font-weight:500;letter-spacing:0.226px;'>20250920-速寫活動</span>
<span class="t" style='left:1991.7px;top:104.0px;font-size:25px;line-height:25px;color:#b2b2b2;letter-spacing:-0.681px;'>General — Saved</span>
<span class="t" style='left:3243.4px;top:106.8px;font-size:25px;line-height:25px;color:#b2b2b2;font-weight:700;letter-spacing:-0.050px;'>Search (Cmd + Ctrl + U)</span>
<span class="t" style='left:133.6px;top:171.6px;font-size:26px;line-height:26px;color:#ededed;font-weight:700;letter-spacing:0.738px;'>Home</span>
<span class="t" style='left:255.5px;top:171.6px;font-size:26px;line-height:26px;color:#e4e4e4;font-weight:700;letter-spacing:0.081px;'>Insert</span>
<span class="t" style='left:379.0px;top:171.6px;font-size:26px;line-height:26px;color:#e4e4e4;font-weight:700;letter-spacing:-0.445px;'>Draw</span>
<span class="t" style='left:491.0px;top:171.6px;font-size:26px;line-height:26px;color:#e4e4e4;font-weight:700;letter-spacing:-0.381px;'>Design</span>
<span class="t" style='left:627.4px;top:171.6px;font-size:26px;line-height:26px;color:#e4e4e4;font-weight:700;letter-spacing:-0.373px;'>Transitions</span>
<span class="t" style='left:817.2px;top:171.6px;font-size:26px;line-height:26px;color:#e4e4e4;font-weight:700;letter-spacing:-0.428px;'>Animations</span>
<span class="t" style='left:1007.0px;top:171.6px;font-size:26px;line-height:26px;color:#e4e4e4;font-weight:700;letter-spacing:-0.369px;'>Slide Show</span>
<span class="t" style='left:1191.5px;top:171.6px;font-size:26px;line-height:26px;color:#e4e4e4;font-weight:700;letter-spacing:-0.563px;'>Record</span>
<span class="t" style='left:1327.0px;top:171.6px;font-size:26px;line-height:26px;color:#e4e4e4;font-weight:700;letter-spacing:-0.435px;'>Review</span>
<span class="t" style='left:1463.3px;top:171.6px;font-size:26px;line-height:26px;color:#e4e4e4;font-weight:700;letter-spacing:-0.070px;'>View</span>
<span class="t" style='left:2907.0px;top:175.8px;font-size:26px;line-height:26px;color:#f4f4f4;letter-spacing:0.029px;'>Record</span>
<span class="t" style='left:3091.0px;top:175.8px;font-size:26px;line-height:26px;color:#9e9e9e;letter-spacing:0.512px;'>Comments</span>
<span class="t" style='left:3282.2px;top:185.3px;font-size:14px;line-height:14px;color:#3a3a3a;font-weight:700;'>T</span>
<span class="t" style='left:3321.5px;top:175.8px;font-size:26px;line-height:26px;color:#f4f4f4;letter-spacing:0.337px;'>Present in Teams</span>
<span class="t" style='left:3626.8px;top:175.8px;font-size:26px;line-height:26px;color:#fff;font-weight:700;letter-spacing:-0.753px;'>Share</span>
<span class="t" style='left:160.3px;top:2320.1px;font-size:24.5px;line-height:24.5px;color:#e2e2e2;letter-spacing:0.134px;'>Slide 1 of 9</span>
<span class="t" style='left:327.0px;top:2320.1px;font-size:24.5px;line-height:24.5px;color:#e2e2e2;letter-spacing:0.357px;'>English (United States)</span>
<span class="t" style='left:673.8px;top:2320.1px;font-size:24.5px;line-height:24.5px;color:#e2e2e2;letter-spacing:0.422px;'>Accessibility: Investigate</span>
<span class="t" style='left:3579.7px;top:2320.7px;font-size:24.5px;line-height:24.5px;color:#e2e2e2;letter-spacing:-0.668px;'>197%</span>
<span class="t" style='left:152.8px;top:303.1px;font-size:21px;line-height:21px;color:#9c9c9c;letter-spacing:0.139px;-webkit-text-stroke:0.55px #9c9c9c;'>Paste</span>
<span class="t" style='left:282.9px;top:235.8px;font-size:21px;line-height:21px;color:#ececec;font-weight:700;letter-spacing:-0.333px;'>Cut</span>
<span class="t" style='left:282.9px;top:279.9px;font-size:21px;line-height:21px;color:#ececec;font-weight:700;letter-spacing:-0.650px;'>Copy</span>
<span class="t" style='left:282.9px;top:323.2px;font-size:21px;line-height:21px;color:#ececec;font-weight:700;letter-spacing:-0.398px;'>Format</span>
<span class="t" style='left:433.4px;top:303.1px;font-size:21px;line-height:21px;color:#ececec;font-weight:700;letter-spacing:-0.029px;'>New</span>
<span class="t" style='left:430.9px;top:327.5px;font-size:21px;line-height:21px;color:#ececec;font-weight:700;letter-spacing:-0.417px;'>Slide</span>
<span class="t" style='left:558.7px;top:235.8px;font-size:21px;line-height:21px;color:#ececec;font-weight:700;letter-spacing:-0.474px;'>Layout</span>
<span class="t" style='left:558.7px;top:279.9px;font-size:21px;line-height:21px;color:#ececec;font-weight:700;letter-spacing:-0.421px;'>Reset</span>
<span class="t" style='left:558.7px;top:323.2px;font-size:21px;line-height:21px;color:#ececec;font-weight:700;letter-spacing:-0.151px;'>Section</span>
<span class="t" style='left:1176.2px;top:237.9px;font-size:35.5px;line-height:35.5px;color:#767676;'>A</span>
<span class="t" style='left:1232.0px;top:243.9px;font-size:28.5px;line-height:28.5px;color:#767676;'>A</span>
<span class="t" style='left:1308.0px;top:238.4px;font-size:35.5px;line-height:35.5px;color:#767676;'>A</span>
<span class="t" style='left:724.2px;top:306.9px;font-size:27px;line-height:27px;color:#8c8c8c;font-weight:700;'>B</span>
<span class="t" style='left:779.5px;top:306.9px;font-size:27px;line-height:27px;color:#8c8c8c;font-family:"Liberation Serif",serif;font-style:italic;'>I</span>
<span class="t" style='left:826.2px;top:305.8px;font-size:25px;line-height:25px;color:#8c8c8c;'>U</span>
<span class="t" style='left:874.0px;top:311.1px;font-size:23.5px;line-height:23.5px;color:#767676;'>ab</span>
<span class="t" style='left:931.5px;top:306.3px;font-size:28px;line-height:28px;color:#8c8c8c;font-weight:700;'>x</span>
<span class="t" style='left:946.3px;top:304.5px;font-size:13px;line-height:13px;color:#2d6796;'>2</span>
<span class="t" style='left:983.5px;top:306.3px;font-size:28px;line-height:28px;color:#8c8c8c;font-weight:700;'>x</span>
<span class="t" style='left:998.3px;top:327.5px;font-size:13px;line-height:13px;color:#2d6796;'>2</span>
<span class="t" style='left:1027.0px;top:302.8px;font-size:25px;line-height:25px;color:#767676;letter-spacing:0.500px;'>AV</span>
<span class="t" style='left:1103.4px;top:307.8px;font-size:28px;line-height:28px;color:#767676;letter-spacing:-0.875px;'>Aa</span>
<span class="t" style='left:1290.2px;top:300.1px;font-size:32px;line-height:32px;color:#767676;'>A</span>
<span class="t" style='left:1474.3px;top:239.5px;font-size:11.5px;line-height:11.5px;color:#2d6796;font-weight:700;'>1</span>
<span class="t" style='left:1474.3px;top:251.3px;font-size:11.5px;line-height:11.5px;color:#2d6796;font-weight:700;'>2</span>
<span class="t" style='left:1474.3px;top:263.1px;font-size:11.5px;line-height:11.5px;color:#2d6796;font-weight:700;'>3</span>
<span class="t" style='left:1653.2px;top:303.7px;font-size:21px;line-height:21px;color:#2d6796;'>A</span>
<span class="t" style='left:1893.0px;top:303.1px;font-size:21px;line-height:21px;color:#9c9c9c;letter-spacing:0.871px;-webkit-text-stroke:0.55px #9c9c9c;'>Convert to</span>
<span class="t" style='left:1900.8px;top:327.5px;font-size:21px;line-height:21px;color:#9c9c9c;letter-spacing:0.820px;-webkit-text-stroke:0.55px #9c9c9c;'>SmartArt</span>
<span class="t" style='left:2057.6px;top:303.1px;font-size:21px;line-height:21px;color:#9c9c9c;letter-spacing:0.606px;-webkit-text-stroke:0.55px #9c9c9c;'>Picture</span>
<span class="t" style='left:2155.4px;top:303.1px;font-size:21px;line-height:21px;color:#9c9c9c;letter-spacing:0.261px;-webkit-text-stroke:0.55px #9c9c9c;'>Shapes</span>
<span class="t" style='left:2267.8px;top:242.1px;font-size:39.5px;line-height:39.5px;color:#2d6796;'>A</span>
<span class="t" style='left:2260.0px;top:303.1px;font-size:21px;line-height:21px;color:#9c9c9c;letter-spacing:0.521px;-webkit-text-stroke:0.55px #9c9c9c;'>Text</span>
<span class="t" style='left:2261.8px;top:327.5px;font-size:21px;line-height:21px;color:#9c9c9c;letter-spacing:0.037px;-webkit-text-stroke:0.55px #9c9c9c;'>Box</span>
<span class="t" style='left:2365.8px;top:303.1px;font-size:21px;line-height:21px;color:#9c9c9c;letter-spacing:0.626px;-webkit-text-stroke:0.55px #9c9c9c;'>Arrange</span>
<span class="t" style='left:2477.5px;top:303.1px;font-size:21px;line-height:21px;color:#9c9c9c;letter-spacing:0.602px;-webkit-text-stroke:0.55px #9c9c9c;'>Quick</span>
<span class="t" style='left:2475.5px;top:327.5px;font-size:21px;line-height:21px;color:#9c9c9c;letter-spacing:0.585px;-webkit-text-stroke:0.55px #9c9c9c;'>Styles</span>
<span class="t" style='left:2611.6px;top:248.2px;font-size:21px;line-height:21px;color:#9c9c9c;letter-spacing:0.321px;-webkit-text-stroke:0.55px #9c9c9c;'>Shape Fill</span>
<span class="t" style='left:2611.6px;top:311.9px;font-size:21px;line-height:21px;color:#9c9c9c;letter-spacing:0.538px;-webkit-text-stroke:0.55px #9c9c9c;'>Shape Outline</span>
<span class="t" style='left:2827.7px;top:303.1px;font-size:21px;line-height:21px;color:#ececec;font-weight:700;letter-spacing:-0.204px;'>Sensitivity</span>
<span class="t" style='left:2982.8px;top:303.1px;font-size:21px;line-height:21px;color:#9c9c9c;letter-spacing:0.828px;-webkit-text-stroke:0.55px #9c9c9c;'>Add-ins</span>
<span class="t" style='left:3112.0px;top:303.1px;font-size:21px;line-height:21px;color:#9c9c9c;letter-spacing:0.519px;-webkit-text-stroke:0.55px #9c9c9c;'>Designer</span>
<span class="t" style='left:3214.0px;top:303.1px;font-size:21px;line-height:21px;color:#9c9c9c;letter-spacing:0.689px;-webkit-text-stroke:0.55px #9c9c9c;'>Copilot</span>
<span class="t" style='left:183.9px;top:962.1px;font-size:25px;line-height:25px;color:#e8e8e8;'>1</span>
<span class="t" style='left:1427.0px;top:962.1px;font-size:25px;line-height:25px;color:#e8e8e8;'>2</span>
<span class="t" style='left:2672.0px;top:962.1px;font-size:25px;line-height:25px;color:#e8e8e8;'>3</span>
<span class="t" style='left:182.4px;top:1607.9px;font-size:25px;line-height:25px;color:#e8e8e8;'>4</span>
<span class="t" style='left:1427.0px;top:1607.9px;font-size:25px;line-height:25px;color:#e8e8e8;'>5</span>
<span class="t" style='left:2672.0px;top:1607.9px;font-size:25px;line-height:25px;color:#e8e8e8;'>6</span>
<span class="t" style='left:182.4px;top:2253.9px;font-size:25px;line-height:25px;color:#e8e8e8;'>7</span>
<span class="t" style='left:1427.0px;top:2253.9px;font-size:25px;line-height:25px;color:#e8e8e8;'>8</span>
<span class="t" style='left:2672.0px;top:2253.9px;font-size:25px;line-height:25px;color:#e8e8e8;'>9</span>
<span class="t" style='left:314.0px;top:584.2px;font-size:63px;line-height:63px;color:#000;font-weight:700;letter-spacing:0.118px;'><span style="position:relative;top:2.4px;font-size:62px">人體速寫</span> Teach back</span>
<span class="t" style='left:312.7px;top:675.8px;font-size:20.6px;line-height:20.6px;color:#7f7f7f;letter-spacing:0.006px;'>主辦：全球美少女观察</span>
<span class="t" style='left:539.2px;top:674.8px;font-size:21px;line-height:21px;color:#7f7f7f;font-weight:700;font-family:"Liberation Serif",serif;font-style:italic;letter-spacing:1.371px;'>Plus</span>
<span class="t" style='left:591.4px;top:675.8px;font-size:20.6px;line-height:20.6px;color:#7f7f7f;letter-spacing:-0.394px;'>羣友</span>
<span class="t" style='left:312.7px;top:708.2px;font-size:20.6px;line-height:20.6px;color:#7f7f7f;letter-spacing:-0.406px;'>主講：@OharaSaya</span>
<span class="t" style='left:312.7px;top:740.2px;font-size:20.6px;line-height:20.6px;color:#7f7f7f;letter-spacing:0.297px;'>2025 Sep 20, <b style="color:#000">21:00</b> (UTC+8) 開始</span>
<span class="t" style='left:312.7px;top:772.5px;font-size:20.6px;line-height:20.6px;color:#000;font-weight:700;letter-spacing:0.006px;'>請稍等。。。</span>
<span class="t" style='left:889.5px;top:899.4px;font-size:18px;line-height:18px;color:#7f7f7f;letter-spacing:0.967px;'>後勤/疑難解答：桐遠暮羽（我）</span>
<span class="t" style='left:1548.8px;top:440.9px;font-size:44.5px;line-height:44.5px;color:#000;font-weight:700;letter-spacing:-0.023px;'>主講人介紹</span>
<span class="t" style='left:1809.1px;top:532.3px;font-size:28.7px;line-height:28.7px;color:#000;'>•</span>
<span class="t" style='left:1827.5px;top:532.3px;font-size:28.7px;line-height:28.7px;color:#000;letter-spacing:-0.021px;'>資深畫畫羣友</span>
<span class="t" style='left:1809.1px;top:574.8px;font-size:28.7px;line-height:28.7px;color:#000;'>•</span>
<span class="t" style='left:1827.5px;top:574.8px;font-size:28.7px;line-height:28.7px;color:#000;letter-spacing:-0.087px;'>資深妳畫我猜玩家</span>
<span class="t" style='left:1809.1px;top:615.5px;font-size:28.7px;line-height:28.7px;color:#000;'>•</span>
<span class="t" style='left:1827.5px;top:615.5px;font-size:28.7px;line-height:28.7px;color:#000;letter-spacing:-0.076px;'>資深美少女遊戲玩家</span>
<span class="t" style='left:1809.1px;top:698.2px;font-size:28.7px;line-height:28.7px;color:#000;'>•</span>
<span class="t" style='left:1827.5px;top:698.2px;font-size:28.7px;line-height:28.7px;color:#000;letter-spacing:0.264px;'>《毛厂速写团练》60 天課程畢業生</span>
<span class="t" style='left:1826.0px;top:728.4px;font-size:24.3px;line-height:24.3px;color:#8c8c8c;letter-spacing:0.387px;'>(並在此期间</span>
<span class="t" style='left:1983.3px;top:728.4px;font-size:24.3px;line-height:24.3px;color:#8c8c8c;letter-spacing:0.403px;'>掉了所有畫猜邀請)</span>
<span class="t" style='left:1565.0px;top:758.5px;font-size:16.6px;line-height:16.6px;color:#000;letter-spacing:0.120px;'>@OharaSaya</span>
<span class="t" style='left:2792.2px;top:440.8px;font-size:44.6px;line-height:44.6px;color:#000;font-weight:700;letter-spacing:-0.025px;'>本次大會的目的</span>
<span class="t" style='left:2746.4px;top:532.3px;font-size:28.7px;line-height:28.7px;color:#000;'>•</span>
<span class="t" style='left:2765.7px;top:532.3px;font-size:28.7px;line-height:28.7px;color:#000;letter-spacing:-0.007px;'>分享一種從《毛厂速写团练》得到的<span style="color:#1a7ea6">速寫實踐</span></span>
<span class="t" style='left:2746.4px;top:574.8px;font-size:28.7px;line-height:28.7px;color:#000;'>•</span>
<span class="t" style='left:2765.7px;top:574.8px;font-size:28.7px;line-height:28.7px;color:#000;letter-spacing:0.070px;'>請各位親自動筆，體驗這種畫法</span>
<span class="t" style='left:303.9px;top:1086.9px;font-size:44.4px;line-height:44.4px;color:#000;font-weight:700;letter-spacing:-0.095px;'>參與方法</span>
<span class="t" style='left:256.4px;top:1178.6px;font-size:28.7px;line-height:28.7px;color:#000;'>•</span>
<span class="t" style='left:275.7px;top:1178.6px;font-size:28.7px;line-height:28.7px;color:#000;font-weight:700;letter-spacing:0.018px;'>今天我們將一起完成一個人物照片的速寫</span>
<span class="t" style='left:293.6px;top:1215.2px;font-size:24.5px;line-height:24.5px;color:#000;'>•</span>
<span class="t" style='left:312.7px;top:1215.2px;font-size:24.5px;line-height:24.5px;color:#000;letter-spacing:0.044px;'>保持打開本屏幕分享</span>
<span class="t" style='left:293.6px;top:1246.6px;font-size:24.5px;line-height:24.5px;color:#000;'>•</span>
<span class="t" style='left:312.7px;top:1246.6px;font-size:24.5px;line-height:24.5px;color:#000;letter-spacing:0.353px;'>同時加入 Magma 茶繪畫布（URL 已發在聊天欄</span>
<span class="t" style='left:293.6px;top:1279.0px;font-size:24.5px;line-height:24.5px;color:#000;'>•</span>
<span class="t" style='left:312.7px;top:1279.0px;font-size:24.5px;line-height:24.5px;color:#000;letter-spacing:0.442px;'>跟着主講的羣友一起畫畫！</span>
<span class="t" style='left:692.5px;top:1304.4px;font-size:4.2px;line-height:4.2px;color:#d8d8d8;font-weight:700;'>File</span>
<span class="t" style='left:705.0px;top:1304.4px;font-size:4.2px;line-height:4.2px;color:#d8d8d8;font-weight:700;'>Edit</span>
<span class="t" style='left:718.5px;top:1304.4px;font-size:4.2px;line-height:4.2px;color:#d8d8d8;font-weight:700;'>View</span>
<span class="t" style='left:732.5px;top:1304.4px;font-size:4.2px;line-height:4.2px;color:#d8d8d8;font-weight:700;'>Filter</span>
<span class="t" style='left:747.5px;top:1304.4px;font-size:4.2px;line-height:4.2px;color:#d8d8d8;font-weight:700;'>Help</span>
<span class="t" style='left:762.3px;top:1304.4px;font-size:4.2px;line-height:4.2px;color:#d8d8d8;font-weight:700;'>Admin</span>
<span class="t" style='left:1125.0px;top:1304.2px;font-size:4.2px;line-height:4.2px;color:#fff;font-weight:700;'>Share</span>
<span class="t" style='left:895.0px;top:1293.0px;font-size:3.6px;line-height:3.6px;color:#aaa;'>magma.com/d/</span>
<span class="t" style='left:1547.3px;top:1086.8px;font-size:44.5px;line-height:44.5px;color:#000;font-weight:700;letter-spacing:0.632px;'>時間安排（準備 10min，畫畫 45min）</span>
<span class="t" style='left:1501.8px;top:1178.6px;font-size:28.7px;line-height:28.7px;color:#000;'>•</span>
<span class="t" style='left:1521.0px;top:1178.6px;font-size:28.7px;line-height:28.7px;color:#000;letter-spacing:0.340px;'>00 開場，介紹流程</span>
<span class="t" style='left:1501.8px;top:1220.2px;font-size:28.7px;line-height:28.7px;color:#000;'>•</span>
<span class="t" style='left:1521.0px;top:1220.2px;font-size:28.7px;line-height:28.7px;color:#000;letter-spacing:0.320px;'>05 各自調整工作區，登入 magma，調整畫筆</span>
<span class="t" style='left:1501.8px;top:1261.8px;font-size:28.7px;line-height:28.7px;color:#000;'>•</span>
<span class="t" style='left:1521.0px;top:1261.8px;font-size:28.7px;line-height:28.7px;color:#000;letter-spacing:-0.281px;'>10 講解，跟畫，演示</span>
<span class="t" style='left:1501.8px;top:1303.4px;font-size:28.7px;line-height:28.7px;color:#000;'>•</span>
<span class="t" style='left:1521.0px;top:1303.4px;font-size:28.7px;line-height:28.7px;color:#000;letter-spacing:0.384px;'>50 總結和問答</span>
<span class="t" style='left:1501.8px;top:1345.0px;font-size:28.7px;line-height:28.7px;color:#000;'>•</span>
<span class="t" style='left:1521.0px;top:1345.0px;font-size:28.7px;line-height:28.7px;color:#000;letter-spacing:0.340px;'>58 問卷和課後作業</span>
<span class="t" style='left:2748.6px;top:1086.8px;font-size:44.5px;line-height:44.5px;color:#000;font-weight:700;letter-spacing:0.844px;'>請打開 Magma URL 並調整畫筆</span>
<span class="t" style='left:2701.5px;top:1175.0px;font-size:26px;line-height:26px;color:#111;font-weight:500;font-family:"Liberation Sans","Noto Sans CJK SC",sans-serif;'>笔刷设置</span>
<span class="t" style='left:2837.8px;top:1175.0px;font-size:26px;line-height:26px;color:#111;font-weight:500;font-family:"Liberation Sans","Noto Sans CJK SC",sans-serif;letter-spacing:1.388px;'>——使用 Round Opacity</span>
<span class="t" style='left:3379.5px;top:1544.9px;font-size:18px;line-height:18px;color:#7f7f7f;letter-spacing:0.967px;'>後勤/疑難解答：桐遠暮羽（我）</span>
<span class="t" style='left:1502.6px;top:1732.1px;font-size:44.5px;line-height:44.5px;color:#000;font-weight:700;letter-spacing:-0.508px;'>總結</span>
<span class="t" style='left:1501.8px;top:1824.6px;font-size:28.7px;line-height:28.7px;color:#000;'>•</span>
<span class="t" style='left:1521.0px;top:1824.6px;font-size:28.7px;line-height:28.7px;color:#000;font-weight:700;letter-spacing:-0.062px;'>人物速寫畫法分享</span>
<span class="t" style='left:1539.0px;top:1860.7px;font-size:24.5px;line-height:24.5px;color:#000;'>•</span>
<span class="t" style='left:1558.0px;top:1860.7px;font-size:24.5px;line-height:24.5px;color:#000;letter-spacing:0.056px;'>使用粗畫筆繪製剪影</span>
<span class="t" style='left:1539.0px;top:1893.1px;font-size:24.5px;line-height:24.5px;color:#000;'>•</span>
<span class="t" style='left:1558.0px;top:1893.1px;font-size:24.5px;line-height:24.5px;color:#000;letter-spacing:-0.600px;'>圖形化</span>
<span class="t" style='left:1539.0px;top:1924.5px;font-size:24.5px;line-height:24.5px;color:#000;'>•</span>
<span class="t" style='left:1558.0px;top:1924.5px;font-size:24.5px;line-height:24.5px;color:#000;letter-spacing:0.207px;'>加透視線轉 3D</span>
<span class="t" style='left:1539.0px;top:1956.9px;font-size:24.5px;line-height:24.5px;color:#000;'>•</span>
<span class="t" style='left:1558.0px;top:1956.9px;font-size:24.5px;line-height:24.5px;color:#000;letter-spacing:-0.600px;'>補線條</span>
<span class="t" style='left:1539.0px;top:1988.3px;font-size:24.5px;line-height:24.5px;color:#000;'>•</span>
<span class="t" style='left:1558.0px;top:1988.3px;font-size:24.5px;line-height:24.5px;color:#000;letter-spacing:-0.225px;'>深入完善</span>
<span class="t" style='left:2793.9px;top:1732.0px;font-size:44.7px;line-height:44.7px;color:#000;font-weight:700;'>問卷調查和課後作業</span>
<span class="t" style='left:2746.4px;top:1824.6px;font-size:28.7px;line-height:28.7px;color:#000;'>•</span>
<span class="t" style='left:2765.7px;top:1824.6px;font-size:28.7px;line-height:28.7px;color:#000;letter-spacing:0.046px;'>我們將會向參加者發放問卷</span>
<span class="t" style='left:2746.4px;top:1867.1px;font-size:28.7px;line-height:28.7px;color:#1a7ea6;'>•</span>
<span class="t" style='left:2765.7px;top:1867.1px;font-size:28.7px;line-height:28.7px;color:#1a7ea6;letter-spacing:0.919px;'>Feedback is a gift！</span>
<span class="t" style='left:2765.7px;top:1897.2px;font-size:28.7px;line-height:28.7px;color:#1a7ea6;letter-spacing:0.113px;'>妳的反饋建議是我們的前進動力！</span>
<span class="t" style='left:2746.4px;top:2022.0px;font-size:28.7px;line-height:28.7px;color:#000;'>•</span>
<span class="t" style='left:2765.7px;top:2022.0px;font-size:28.7px;line-height:28.7px;color:#000;letter-spacing:0.269px;'>請在下週六之前，完善妳在 Magma 上的繪畫</span>
<span class="t" style='left:2783.6px;top:2058.5px;font-size:24.5px;line-height:24.5px;color:#000;'>•</span>
<span class="t" style='left:2802.7px;top:2058.5px;font-size:24.5px;line-height:24.5px;color:#000;letter-spacing:0.223px;'>完成後請發送到羣裏並 @ 我，謝謝！</span>
</div><div id="rim"></div></div>
</body></html>
